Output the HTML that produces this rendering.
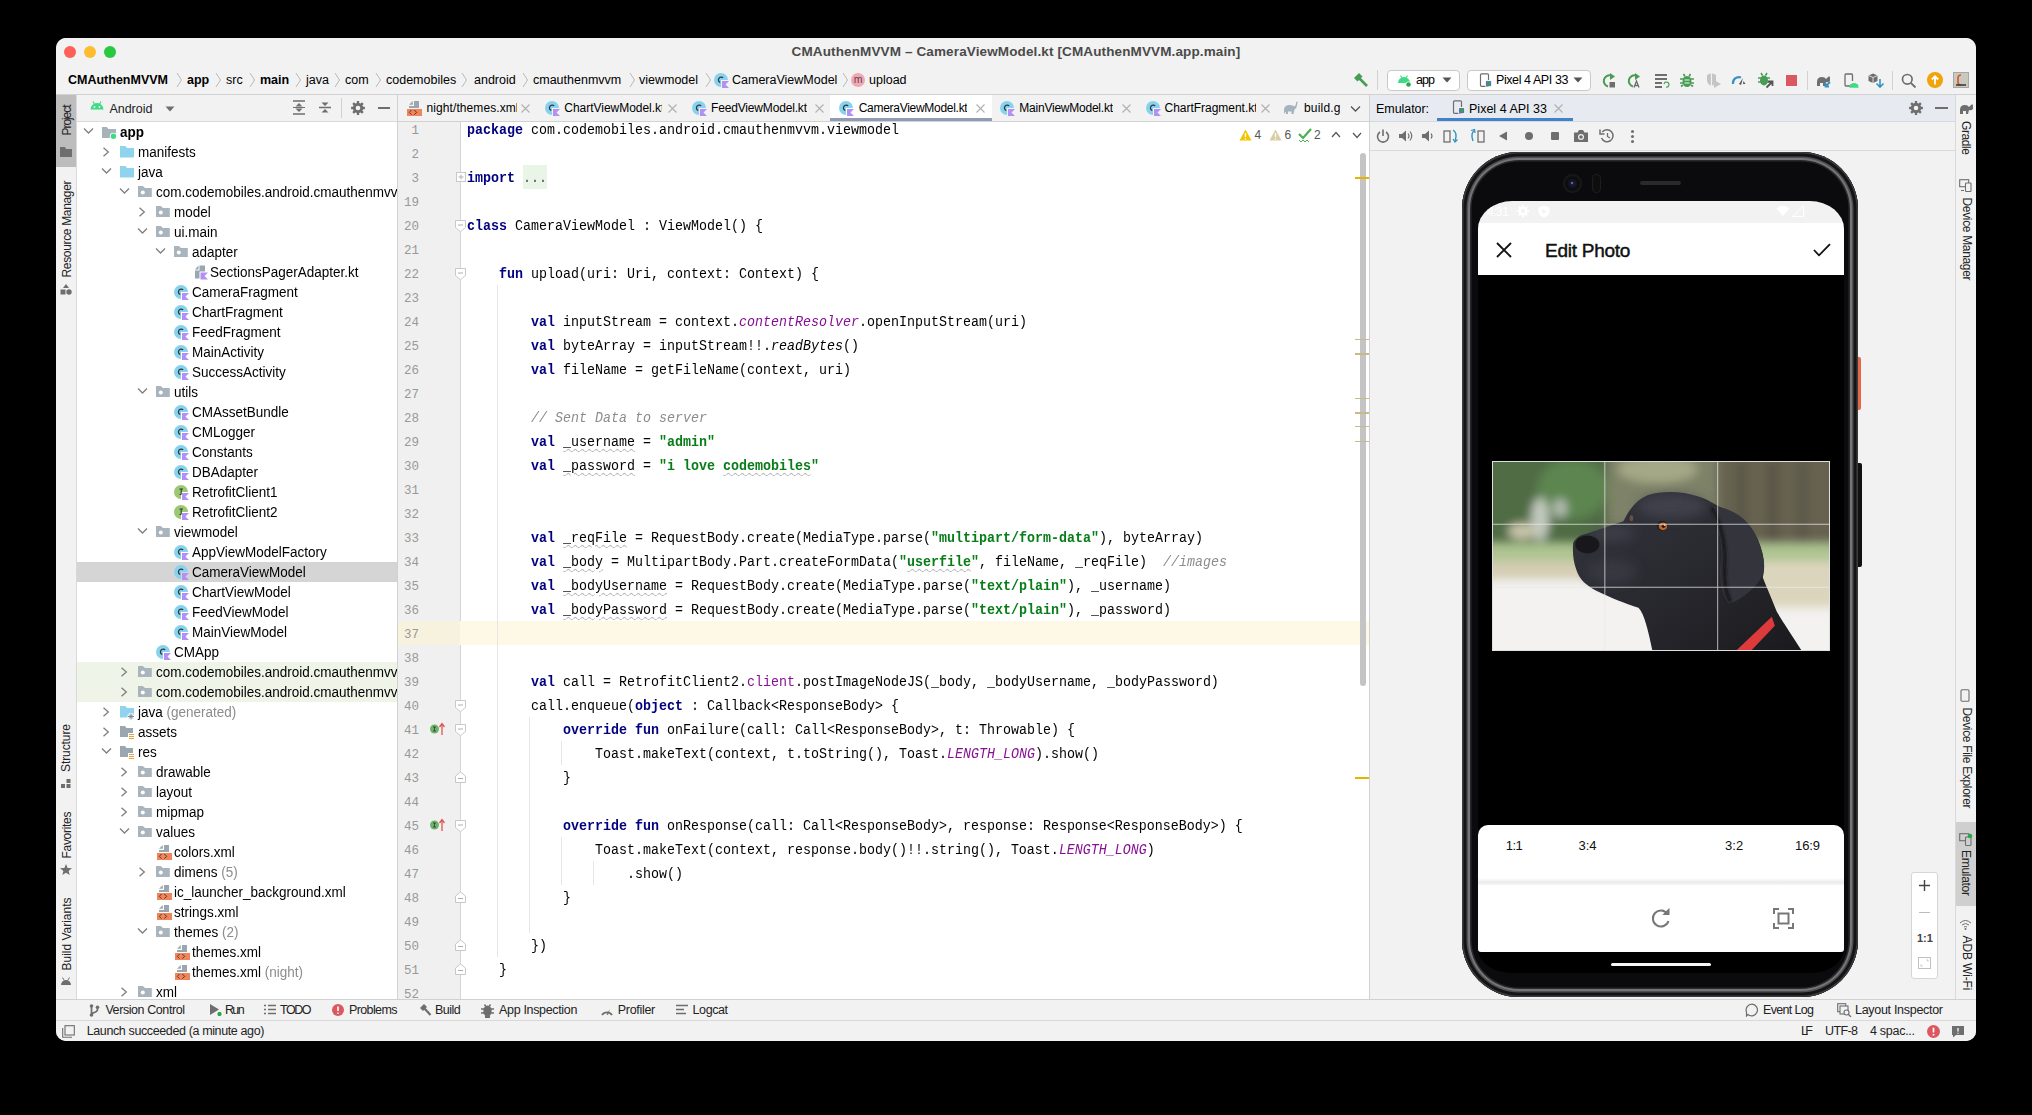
<!DOCTYPE html><html><head><meta charset="utf-8"><style>html,body{margin:0;padding:0;background:#000;width:2032px;height:1115px;overflow:hidden}.t{position:absolute;white-space:pre;font-family:"Liberation Sans", sans-serif}.r{position:absolute;display:block}.m{font-family:"Liberation Mono", monospace}.k{color:#000080;font-weight:700}.s{color:#067d17;font-weight:700}.c{color:#8c8c8c;font-style:italic}.p{color:#871094;font-style:italic}.q{color:#871094}.w{text-decoration:underline wavy #bdbdbd;text-decoration-thickness:1px;text-underline-offset:2px}#win{position:absolute;left:56px;top:38px;width:1920px;height:1003px;border-radius:10px;overflow:hidden;background:#f2f2f2}#in{position:absolute;left:-56px;top:-38px;width:2032px;height:1115px}</style></head><body><div id="win"><div id="in">
<div class="r" style="left:56px;top:38px;width:1920px;height:56px;background:#f2f2f2;"></div>
<div class="r" style="left:56px;top:94px;width:1920px;height:1px;background:#d1d1d1;"></div>
<div class="r" style="left:64px;top:46px;width:12px;height:12px;border-radius:50%;background:#fe5f57"></div>
<div class="r" style="left:84px;top:46px;width:12px;height:12px;border-radius:50%;background:#febc2e"></div>
<div class="r" style="left:104px;top:46px;width:12px;height:12px;border-radius:50%;background:#28c840"></div>
<div class="t" style="left:791.6px;top:42.6px;line-height:18px;font-size:13.5px;color:#4a4a4a;font-weight:700;letter-spacing:0.126px;">CMAuthenMVVM – CameraViewModel.kt [CMAuthenMVVM.app.main]</div>
<div class="t" style="left:68px;top:70.5px;line-height:18px;font-size:12.5px;color:#000;font-weight:700;">CMAuthenMVVM</div>
<div class="t" style="left:187px;top:70.5px;line-height:18px;font-size:12.5px;color:#000;font-weight:700;">app</div>
<div class="t" style="left:226px;top:70.5px;line-height:18px;font-size:12.5px;color:#000;font-weight:400;">src</div>
<div class="t" style="left:260px;top:70.5px;line-height:18px;font-size:12.5px;color:#000;font-weight:700;">main</div>
<div class="t" style="left:306px;top:70.5px;line-height:18px;font-size:12.5px;color:#000;font-weight:400;">java</div>
<div class="t" style="left:345px;top:70.5px;line-height:18px;font-size:12.5px;color:#000;font-weight:400;">com</div>
<div class="t" style="left:386px;top:70.5px;line-height:18px;font-size:12.5px;color:#000;font-weight:400;">codemobiles</div>
<div class="t" style="left:474px;top:70.5px;line-height:18px;font-size:12.5px;color:#000;font-weight:400;">android</div>
<div class="t" style="left:533px;top:70.5px;line-height:18px;font-size:12.5px;color:#000;font-weight:400;">cmauthenmvvm</div>
<div class="t" style="left:639px;top:70.5px;line-height:18px;font-size:12.5px;color:#000;font-weight:400;">viewmodel</div>
<div class="t" style="left:732px;top:70.5px;line-height:18px;font-size:12.5px;color:#000;font-weight:400;">CameraViewModel</div>
<div class="t" style="left:869px;top:70.5px;line-height:18px;font-size:12.5px;color:#000;font-weight:400;">upload</div>
<svg class="r" style="left:176px;top:71.5px;" width="7" height="16" viewBox="0 0 7 16"><path d="M1 1 L5.5 8 L1 15" stroke="#b8b8b8" stroke-width="1" fill="none"/></svg>
<svg class="r" style="left:215px;top:71.5px;" width="7" height="16" viewBox="0 0 7 16"><path d="M1 1 L5.5 8 L1 15" stroke="#b8b8b8" stroke-width="1" fill="none"/></svg>
<svg class="r" style="left:249px;top:71.5px;" width="7" height="16" viewBox="0 0 7 16"><path d="M1 1 L5.5 8 L1 15" stroke="#b8b8b8" stroke-width="1" fill="none"/></svg>
<svg class="r" style="left:295px;top:71.5px;" width="7" height="16" viewBox="0 0 7 16"><path d="M1 1 L5.5 8 L1 15" stroke="#b8b8b8" stroke-width="1" fill="none"/></svg>
<svg class="r" style="left:334px;top:71.5px;" width="7" height="16" viewBox="0 0 7 16"><path d="M1 1 L5.5 8 L1 15" stroke="#b8b8b8" stroke-width="1" fill="none"/></svg>
<svg class="r" style="left:375px;top:71.5px;" width="7" height="16" viewBox="0 0 7 16"><path d="M1 1 L5.5 8 L1 15" stroke="#b8b8b8" stroke-width="1" fill="none"/></svg>
<svg class="r" style="left:461px;top:71.5px;" width="7" height="16" viewBox="0 0 7 16"><path d="M1 1 L5.5 8 L1 15" stroke="#b8b8b8" stroke-width="1" fill="none"/></svg>
<svg class="r" style="left:522px;top:71.5px;" width="7" height="16" viewBox="0 0 7 16"><path d="M1 1 L5.5 8 L1 15" stroke="#b8b8b8" stroke-width="1" fill="none"/></svg>
<svg class="r" style="left:629px;top:71.5px;" width="7" height="16" viewBox="0 0 7 16"><path d="M1 1 L5.5 8 L1 15" stroke="#b8b8b8" stroke-width="1" fill="none"/></svg>
<svg class="r" style="left:705px;top:71.5px;" width="7" height="16" viewBox="0 0 7 16"><path d="M1 1 L5.5 8 L1 15" stroke="#b8b8b8" stroke-width="1" fill="none"/></svg>
<svg class="r" style="left:842px;top:71.5px;" width="7" height="16" viewBox="0 0 7 16"><path d="M1 1 L5.5 8 L1 15" stroke="#b8b8b8" stroke-width="1" fill="none"/></svg>
<svg class="r" style="left:714px;top:71.5px;" width="16" height="17" viewBox="0 0 16 17"><path d="M14 8 A7 7 0 1 0 7 15 L7 8 Z" fill="#87d2ee"/><path d="M9.2 5.9 A2.8 2.8 0 1 0 6.2 10.5" stroke="#333" stroke-width="1.2" fill="none"/><path d="M8 9 H15 L11.5 12.5 L15 16 H8 Z" fill="#b191f5"/></svg>
<div class="r" style="left:851px;top:72.5px;width:14px;height:14px;border-radius:50%;background:#f2a7b4;color:#5a4a4e;font-size:10.5px;font-family:'Liberation Sans',sans-serif;line-height:13.5px;text-align:center">m</div>
<div class="r" style="left:56px;top:95px;width:20px;height:905px;background:#f2f2f2;"></div>
<div class="r" style="left:76px;top:95px;width:1px;height:905px;background:#d9d9d9;"></div>
<div class="r" style="left:56px;top:95px;width:20px;height:72px;background:#bdbdbd;"></div>
<div class="t" style="left:50.5px;top:111.5px;width:71px;margin-left:-20px;height:16px;line-height:16px;text-align:center;font-size:12px;color:#222;letter-spacing:-1.057px;text-indent:-1.057px;transform:rotate(-90deg)">Project</div>
<svg class="r" style="left:60px;top:147px;" width="12" height="10" viewBox="0 0 12 10"><path d="M0 0 H5 L6 2 H12 V10 H0 Z" fill="#6e6e6e"/></svg>
<div class="t" style="left:17.5px;top:220.5px;width:137px;margin-left:-20px;height:16px;line-height:16px;text-align:center;font-size:12px;color:#222;letter-spacing:-0.336px;text-indent:-0.336px;transform:rotate(-90deg)">Resource Manager</div>
<svg class="r" style="left:60px;top:284px;" width="12" height="11" viewBox="0 0 12 11"><path d="M6 0 L9 4 H3 Z" fill="#6e6e6e"/><rect x="0.5" y="5.5" width="5" height="5" fill="#6e6e6e"/><circle cx="9" cy="8" r="2.7" fill="#6e6e6e"/></svg>
<div class="t" style="left:42.0px;top:740.0px;width:88px;margin-left:-20px;height:16px;line-height:16px;text-align:center;font-size:12px;color:#222;letter-spacing:-0.084px;text-indent:-0.084px;transform:rotate(-90deg)">Structure</div>
<svg class="r" style="left:61px;top:779px;" width="10" height="9" viewBox="0 0 10 9"><rect x="0" y="5" width="4" height="4" fill="#6e6e6e"/><rect x="5.5" y="5" width="4" height="4" fill="#6e6e6e"/><rect x="5.5" y="0" width="4" height="4" fill="#6e6e6e"/></svg>
<div class="t" style="left:42.5px;top:826.5px;width:87px;margin-left:-20px;height:16px;line-height:16px;text-align:center;font-size:12px;color:#222;letter-spacing:-0.293px;text-indent:-0.293px;transform:rotate(-90deg)">Favorites</div>
<svg class="r" style="left:60px;top:864px;" width="12" height="11" viewBox="0 0 12 11"><path d="M6 0 L7.6 4 L12 4.2 L8.6 7 L9.7 11 L6 8.7 L2.3 11 L3.4 7 L0 4.2 L4.4 4 Z" fill="#6e6e6e"/></svg>
<div class="t" style="left:29.5px;top:925.5px;width:113px;margin-left:-20px;height:16px;line-height:16px;text-align:center;font-size:12px;color:#222;letter-spacing:-0.011px;text-indent:-0.011px;transform:rotate(-90deg)">Build Variants</div>
<svg class="r" style="left:60px;top:977px;" width="12" height="8" viewBox="0 0 12 8"><path d="M1 8 A5 5 0 0 1 11 8 Z" fill="#6e6e6e"/><path d="M2.5 0.5 L4 3 M9.5 0.5 L8 3" stroke="#6e6e6e" stroke-width="1"/></svg>
<div class="r" style="left:77px;top:95px;width:320px;height:26px;background:#f2f2f2;"></div>
<div class="r" style="left:77px;top:121px;width:320px;height:1px;background:#d9d9d9;"></div>
<div class="r" style="left:397px;top:95px;width:1px;height:905px;background:#d1d1d1;"></div>
<svg class="r" style="left:90px;top:101px;" width="14" height="9" viewBox="0 0 14 9"><path d="M0.5 8.5 A6.5 6.5 0 0 1 13.5 8.5 Z" fill="#3ddc84"/><path d="M3 0.5 L4.5 3 M11 0.5 L9.5 3" stroke="#3ddc84" stroke-width="1.2"/><circle cx="4.5" cy="6" r="0.9" fill="#f2f2f2"/><circle cx="9.5" cy="6" r="0.9" fill="#f2f2f2"/></svg>
<div class="t" style="left:109.4px;top:99.7px;line-height:18px;font-size:12.5px;color:#222;font-weight:400;letter-spacing:-0.016px;">Android</div>
<svg class="r" style="left:165px;top:106px;" width="10" height="6" viewBox="0 0 10 6"><path d="M0.5 0.5 H9.5 L5 5.5 Z" fill="#6e6e6e"/></svg>
<svg class="r" style="left:292px;top:100px;" width="14" height="15" viewBox="0 0 14 15"><path d="M1 1 H13 M1 14 H13" stroke="#6e6e6e" stroke-width="1.5"/><path d="M7 3 L3.5 6.5 H10.5 Z M7 12 L3.5 8.5 H10.5 Z" fill="#6e6e6e"/><path d="M1 7.5 H13" stroke="#6e6e6e" stroke-width="1"/></svg>
<svg class="r" style="left:318px;top:100px;" width="14" height="15" viewBox="0 0 14 15"><path d="M1 7.5 H13" stroke="#6e6e6e" stroke-width="1.5"/><path d="M7 6 L3.5 2.5 H10.5 Z M7 9 L3.5 12.5 H10.5 Z" fill="#6e6e6e"/></svg>
<div class="r" style="left:341px;top:98px;width:1px;height:20px;background:#d1d1d1;"></div>
<svg class="r" style="left:351px;top:101px;" width="14" height="14" viewBox="0 0 14 14"><g transform="scale(1.0)"><path d="M13.90 5.82 L13.90 8.18 L12.07 8.15 L11.40 9.77 L12.72 11.04 L11.04 12.72 L9.77 11.40 L8.15 12.07 L8.18 13.90 L5.82 13.90 L5.85 12.07 L4.23 11.40 L2.96 12.72 L1.28 11.04 L2.60 9.77 L1.93 8.15 L0.10 8.18 L0.10 5.82 L1.93 5.85 L2.60 4.23 L1.28 2.96 L2.96 1.28 L4.23 2.60 L5.85 1.93 L5.82 0.10 L8.18 0.10 L8.15 1.93 L9.77 2.60 L11.04 1.28 L12.72 2.96 L11.40 4.23 L12.07 5.85 Z" fill="#6e6e6e"/><circle cx="7" cy="7" r="2.3" fill="#f2f2f2"/></g></svg>
<div class="r" style="left:378px;top:107px;width:12px;height:2px;background:#6e6e6e;"></div>
<div class="r" style="left:77px;top:122px;width:320px;height:877px;overflow:hidden;background:#fff;"><div class="r" style="left:-77px;top:-122px;width:2032px;height:1115px">
<div class="r" style="left:77px;top:562px;width:320px;height:20px;background:#d5d5d5;"></div>
<div class="r" style="left:77px;top:662px;width:320px;height:40px;background:#eef5e8;"></div>
<svg class="r" style="left:82.8px;top:127.4px;" width="11" height="8" viewBox="0 0 11 8"><path d="M1 1.5 L5.5 6 L10 1.5" stroke="#7f7f7f" stroke-width="1.3" fill="none"/></svg>
<svg class="r" style="left:102px;top:124px;" width="16" height="17" viewBox="0 0 16 17"><path d="M0 3 H4.8 L6.5 5 H14 V14 H0 Z" fill="#a7b2bb"/><circle cx="11.4" cy="12.3" r="3.6" fill="#fff"/><circle cx="11.4" cy="12.3" r="2.7" fill="#3ddc84"/></svg>
<div class="t" style="left:120px;top:122.6px;line-height:20px;font-size:13.5px;color:#000;font-weight:700;transform-origin:0 14.7px;transform:scaleY(1.07)">app</div>
<svg class="r" style="left:102.2px;top:146.5px;" width="8" height="10" viewBox="0 0 8 10"><path d="M1.5 0.8 L6.3 5 L1.5 9.2" stroke="#7f7f7f" stroke-width="1.3" fill="none"/></svg>
<svg class="r" style="left:119px;top:145px;" width="16" height="14" viewBox="0 0 16 14"><path d="M1 1 H6.5 L8 3 H15 V12.5 H1 Z" fill="#8fd3ec"/></svg>
<div class="t" style="left:138px;top:142.6px;line-height:20px;font-size:13.5px;color:#000;font-weight:400;transform-origin:0 14.7px;transform:scaleY(1.07)">manifests</div>
<svg class="r" style="left:100.8px;top:167.4px;" width="11" height="8" viewBox="0 0 11 8"><path d="M1 1.5 L5.5 6 L10 1.5" stroke="#7f7f7f" stroke-width="1.3" fill="none"/></svg>
<svg class="r" style="left:119px;top:165px;" width="16" height="14" viewBox="0 0 16 14"><path d="M1 1 H6.5 L8 3 H15 V12.5 H1 Z" fill="#8fd3ec"/></svg>
<div class="t" style="left:138px;top:162.6px;line-height:20px;font-size:13.5px;color:#000;font-weight:400;transform-origin:0 14.7px;transform:scaleY(1.07)">java</div>
<svg class="r" style="left:118.8px;top:187.4px;" width="11" height="8" viewBox="0 0 11 8"><path d="M1 1.5 L5.5 6 L10 1.5" stroke="#7f7f7f" stroke-width="1.3" fill="none"/></svg>
<svg class="r" style="left:137px;top:185px;" width="16" height="14" viewBox="0 0 16 14"><path d="M1 1 H5.8 L8 3 H14.8 V12 H1 Z" fill="#a9b4bd"/><circle cx="5.8" cy="7.5" r="2" fill="#fff"/></svg>
<div class="t" style="left:156px;top:182.6px;line-height:20px;font-size:13.5px;color:#000;font-weight:400;transform-origin:0 14.7px;transform:scaleY(1.07)">com.codemobiles.android.cmauthenmvvm</div>
<svg class="r" style="left:138.2px;top:206.5px;" width="8" height="10" viewBox="0 0 8 10"><path d="M1.5 0.8 L6.3 5 L1.5 9.2" stroke="#7f7f7f" stroke-width="1.3" fill="none"/></svg>
<svg class="r" style="left:155px;top:205px;" width="16" height="14" viewBox="0 0 16 14"><path d="M1 1 H5.8 L8 3 H14.8 V12 H1 Z" fill="#a9b4bd"/><circle cx="5.8" cy="7.5" r="2" fill="#fff"/></svg>
<div class="t" style="left:174px;top:202.6px;line-height:20px;font-size:13.5px;color:#000;font-weight:400;transform-origin:0 14.7px;transform:scaleY(1.07)">model</div>
<svg class="r" style="left:136.8px;top:227.4px;" width="11" height="8" viewBox="0 0 11 8"><path d="M1 1.5 L5.5 6 L10 1.5" stroke="#7f7f7f" stroke-width="1.3" fill="none"/></svg>
<svg class="r" style="left:155px;top:225px;" width="16" height="14" viewBox="0 0 16 14"><path d="M1 1 H5.8 L8 3 H14.8 V12 H1 Z" fill="#a9b4bd"/><circle cx="5.8" cy="7.5" r="2" fill="#fff"/></svg>
<div class="t" style="left:174px;top:222.6px;line-height:20px;font-size:13.5px;color:#000;font-weight:400;transform-origin:0 14.7px;transform:scaleY(1.07)">ui.main</div>
<svg class="r" style="left:154.8px;top:247.4px;" width="11" height="8" viewBox="0 0 11 8"><path d="M1 1.5 L5.5 6 L10 1.5" stroke="#7f7f7f" stroke-width="1.3" fill="none"/></svg>
<svg class="r" style="left:173px;top:245px;" width="16" height="14" viewBox="0 0 16 14"><path d="M1 1 H5.8 L8 3 H14.8 V12 H1 Z" fill="#a9b4bd"/><circle cx="5.8" cy="7.5" r="2" fill="#fff"/></svg>
<div class="t" style="left:192px;top:242.6px;line-height:20px;font-size:13.5px;color:#000;font-weight:400;transform-origin:0 14.7px;transform:scaleY(1.07)">adapter</div>
<svg class="r" style="left:194px;top:264px;" width="16" height="17" viewBox="0 0 16 17"><path d="M1 5.5 L4.5 1.5 V5.5 Z" fill="#9aa7b0"/><path d="M5.5 1.5 H11 V7.5 H5.5 V14.5 H1 V6.5 H5.5 Z" fill="#9aa7b0"/><path d="M6.5 8.5 H14 L10.5 12 L14 15.5 H6.5 Z" fill="#b191f5"/></svg>
<div class="t" style="left:210px;top:262.6px;line-height:20px;font-size:13.5px;color:#000;font-weight:400;transform-origin:0 14.7px;transform:scaleY(1.07)">SectionsPagerAdapter.kt</div>
<svg class="r" style="left:174px;top:284px;" width="16" height="17" viewBox="0 0 16 17"><path d="M14 8 A7 7 0 1 0 7 15 L7 8 Z" fill="#87d2ee"/><path d="M9.2 5.9 A2.8 2.8 0 1 0 6.2 10.5" stroke="#333" stroke-width="1.2" fill="none"/><path d="M8 9 H15 L11.5 12.5 L15 16 H8 Z" fill="#b191f5"/></svg>
<div class="t" style="left:192px;top:282.6px;line-height:20px;font-size:13.5px;color:#000;font-weight:400;transform-origin:0 14.7px;transform:scaleY(1.07)">CameraFragment</div>
<svg class="r" style="left:174px;top:304px;" width="16" height="17" viewBox="0 0 16 17"><path d="M14 8 A7 7 0 1 0 7 15 L7 8 Z" fill="#87d2ee"/><path d="M9.2 5.9 A2.8 2.8 0 1 0 6.2 10.5" stroke="#333" stroke-width="1.2" fill="none"/><path d="M8 9 H15 L11.5 12.5 L15 16 H8 Z" fill="#b191f5"/></svg>
<div class="t" style="left:192px;top:302.6px;line-height:20px;font-size:13.5px;color:#000;font-weight:400;transform-origin:0 14.7px;transform:scaleY(1.07)">ChartFragment</div>
<svg class="r" style="left:174px;top:324px;" width="16" height="17" viewBox="0 0 16 17"><path d="M14 8 A7 7 0 1 0 7 15 L7 8 Z" fill="#87d2ee"/><path d="M9.2 5.9 A2.8 2.8 0 1 0 6.2 10.5" stroke="#333" stroke-width="1.2" fill="none"/><path d="M8 9 H15 L11.5 12.5 L15 16 H8 Z" fill="#b191f5"/></svg>
<div class="t" style="left:192px;top:322.6px;line-height:20px;font-size:13.5px;color:#000;font-weight:400;transform-origin:0 14.7px;transform:scaleY(1.07)">FeedFragment</div>
<svg class="r" style="left:174px;top:344px;" width="16" height="17" viewBox="0 0 16 17"><path d="M14 8 A7 7 0 1 0 7 15 L7 8 Z" fill="#87d2ee"/><path d="M9.2 5.9 A2.8 2.8 0 1 0 6.2 10.5" stroke="#333" stroke-width="1.2" fill="none"/><path d="M8 9 H15 L11.5 12.5 L15 16 H8 Z" fill="#b191f5"/></svg>
<div class="t" style="left:192px;top:342.6px;line-height:20px;font-size:13.5px;color:#000;font-weight:400;transform-origin:0 14.7px;transform:scaleY(1.07)">MainActivity</div>
<svg class="r" style="left:174px;top:364px;" width="16" height="17" viewBox="0 0 16 17"><path d="M14 8 A7 7 0 1 0 7 15 L7 8 Z" fill="#87d2ee"/><path d="M9.2 5.9 A2.8 2.8 0 1 0 6.2 10.5" stroke="#333" stroke-width="1.2" fill="none"/><path d="M8 9 H15 L11.5 12.5 L15 16 H8 Z" fill="#b191f5"/></svg>
<div class="t" style="left:192px;top:362.6px;line-height:20px;font-size:13.5px;color:#000;font-weight:400;transform-origin:0 14.7px;transform:scaleY(1.07)">SuccessActivity</div>
<svg class="r" style="left:136.8px;top:387.4px;" width="11" height="8" viewBox="0 0 11 8"><path d="M1 1.5 L5.5 6 L10 1.5" stroke="#7f7f7f" stroke-width="1.3" fill="none"/></svg>
<svg class="r" style="left:155px;top:385px;" width="16" height="14" viewBox="0 0 16 14"><path d="M1 1 H5.8 L8 3 H14.8 V12 H1 Z" fill="#a9b4bd"/><circle cx="5.8" cy="7.5" r="2" fill="#fff"/></svg>
<div class="t" style="left:174px;top:382.6px;line-height:20px;font-size:13.5px;color:#000;font-weight:400;transform-origin:0 14.7px;transform:scaleY(1.07)">utils</div>
<svg class="r" style="left:174px;top:404px;" width="16" height="17" viewBox="0 0 16 17"><path d="M14 8 A7 7 0 1 0 7 15 L7 8 Z" fill="#87d2ee"/><path d="M9.2 5.9 A2.8 2.8 0 1 0 6.2 10.5" stroke="#333" stroke-width="1.2" fill="none"/><path d="M8 9 H15 L11.5 12.5 L15 16 H8 Z" fill="#b191f5"/></svg>
<div class="t" style="left:192px;top:402.6px;line-height:20px;font-size:13.5px;color:#000;font-weight:400;transform-origin:0 14.7px;transform:scaleY(1.07)">CMAssetBundle</div>
<svg class="r" style="left:174px;top:424px;" width="16" height="17" viewBox="0 0 16 17"><path d="M14 8 A7 7 0 1 0 7 15 L7 8 Z" fill="#87d2ee"/><path d="M9.2 5.9 A2.8 2.8 0 1 0 6.2 10.5" stroke="#333" stroke-width="1.2" fill="none"/><path d="M8 9 H15 L11.5 12.5 L15 16 H8 Z" fill="#b191f5"/></svg>
<div class="t" style="left:192px;top:422.6px;line-height:20px;font-size:13.5px;color:#000;font-weight:400;transform-origin:0 14.7px;transform:scaleY(1.07)">CMLogger</div>
<svg class="r" style="left:174px;top:444px;" width="16" height="17" viewBox="0 0 16 17"><path d="M14 8 A7 7 0 1 0 7 15 L7 8 Z" fill="#87d2ee"/><path d="M9.2 5.9 A2.8 2.8 0 1 0 6.2 10.5" stroke="#333" stroke-width="1.2" fill="none"/><path d="M8 9 H15 L11.5 12.5 L15 16 H8 Z" fill="#b191f5"/></svg>
<div class="t" style="left:192px;top:442.6px;line-height:20px;font-size:13.5px;color:#000;font-weight:400;transform-origin:0 14.7px;transform:scaleY(1.07)">Constants</div>
<svg class="r" style="left:174px;top:464px;" width="16" height="17" viewBox="0 0 16 17"><path d="M14 8 A7 7 0 1 0 7 15 L7 8 Z" fill="#87d2ee"/><path d="M9.2 5.9 A2.8 2.8 0 1 0 6.2 10.5" stroke="#333" stroke-width="1.2" fill="none"/><path d="M8 9 H15 L11.5 12.5 L15 16 H8 Z" fill="#b191f5"/></svg>
<div class="t" style="left:192px;top:462.6px;line-height:20px;font-size:13.5px;color:#000;font-weight:400;transform-origin:0 14.7px;transform:scaleY(1.07)">DBAdapter</div>
<svg class="r" style="left:174px;top:484px;" width="16" height="17" viewBox="0 0 16 17"><path d="M14 8 A7 7 0 1 0 7 15 L7 8 Z" fill="#9ac971"/><path d="M5.5 5 H9 M7.2 5 V10.5 M5.5 10.5 H7" stroke="#333" stroke-width="1.1" fill="none"/><path d="M8 9 H15 L11.5 12.5 L15 16 H8 Z" fill="#b191f5"/></svg>
<div class="t" style="left:192px;top:482.6px;line-height:20px;font-size:13.5px;color:#000;font-weight:400;transform-origin:0 14.7px;transform:scaleY(1.07)">RetrofitClient1</div>
<svg class="r" style="left:174px;top:504px;" width="16" height="17" viewBox="0 0 16 17"><path d="M14 8 A7 7 0 1 0 7 15 L7 8 Z" fill="#9ac971"/><path d="M5.5 5 H9 M7.2 5 V10.5 M5.5 10.5 H7" stroke="#333" stroke-width="1.1" fill="none"/><path d="M8 9 H15 L11.5 12.5 L15 16 H8 Z" fill="#b191f5"/></svg>
<div class="t" style="left:192px;top:502.6px;line-height:20px;font-size:13.5px;color:#000;font-weight:400;transform-origin:0 14.7px;transform:scaleY(1.07)">RetrofitClient2</div>
<svg class="r" style="left:136.8px;top:527.4px;" width="11" height="8" viewBox="0 0 11 8"><path d="M1 1.5 L5.5 6 L10 1.5" stroke="#7f7f7f" stroke-width="1.3" fill="none"/></svg>
<svg class="r" style="left:155px;top:525px;" width="16" height="14" viewBox="0 0 16 14"><path d="M1 1 H5.8 L8 3 H14.8 V12 H1 Z" fill="#a9b4bd"/><circle cx="5.8" cy="7.5" r="2" fill="#fff"/></svg>
<div class="t" style="left:174px;top:522.6px;line-height:20px;font-size:13.5px;color:#000;font-weight:400;transform-origin:0 14.7px;transform:scaleY(1.07)">viewmodel</div>
<svg class="r" style="left:174px;top:544px;" width="16" height="17" viewBox="0 0 16 17"><path d="M14 8 A7 7 0 1 0 7 15 L7 8 Z" fill="#87d2ee"/><path d="M9.2 5.9 A2.8 2.8 0 1 0 6.2 10.5" stroke="#333" stroke-width="1.2" fill="none"/><path d="M8 9 H15 L11.5 12.5 L15 16 H8 Z" fill="#b191f5"/></svg>
<div class="t" style="left:192px;top:542.6px;line-height:20px;font-size:13.5px;color:#000;font-weight:400;transform-origin:0 14.7px;transform:scaleY(1.07)">AppViewModelFactory</div>
<svg class="r" style="left:174px;top:564px;" width="16" height="17" viewBox="0 0 16 17"><path d="M14 8 A7 7 0 1 0 7 15 L7 8 Z" fill="#87d2ee"/><path d="M9.2 5.9 A2.8 2.8 0 1 0 6.2 10.5" stroke="#333" stroke-width="1.2" fill="none"/><path d="M8 9 H15 L11.5 12.5 L15 16 H8 Z" fill="#b191f5"/></svg>
<div class="t" style="left:192px;top:562.6px;line-height:20px;font-size:13.5px;color:#000;font-weight:400;transform-origin:0 14.7px;transform:scaleY(1.07)">CameraViewModel</div>
<svg class="r" style="left:174px;top:584px;" width="16" height="17" viewBox="0 0 16 17"><path d="M14 8 A7 7 0 1 0 7 15 L7 8 Z" fill="#87d2ee"/><path d="M9.2 5.9 A2.8 2.8 0 1 0 6.2 10.5" stroke="#333" stroke-width="1.2" fill="none"/><path d="M8 9 H15 L11.5 12.5 L15 16 H8 Z" fill="#b191f5"/></svg>
<div class="t" style="left:192px;top:582.6px;line-height:20px;font-size:13.5px;color:#000;font-weight:400;transform-origin:0 14.7px;transform:scaleY(1.07)">ChartViewModel</div>
<svg class="r" style="left:174px;top:604px;" width="16" height="17" viewBox="0 0 16 17"><path d="M14 8 A7 7 0 1 0 7 15 L7 8 Z" fill="#87d2ee"/><path d="M9.2 5.9 A2.8 2.8 0 1 0 6.2 10.5" stroke="#333" stroke-width="1.2" fill="none"/><path d="M8 9 H15 L11.5 12.5 L15 16 H8 Z" fill="#b191f5"/></svg>
<div class="t" style="left:192px;top:602.6px;line-height:20px;font-size:13.5px;color:#000;font-weight:400;transform-origin:0 14.7px;transform:scaleY(1.07)">FeedViewModel</div>
<svg class="r" style="left:174px;top:624px;" width="16" height="17" viewBox="0 0 16 17"><path d="M14 8 A7 7 0 1 0 7 15 L7 8 Z" fill="#87d2ee"/><path d="M9.2 5.9 A2.8 2.8 0 1 0 6.2 10.5" stroke="#333" stroke-width="1.2" fill="none"/><path d="M8 9 H15 L11.5 12.5 L15 16 H8 Z" fill="#b191f5"/></svg>
<div class="t" style="left:192px;top:622.6px;line-height:20px;font-size:13.5px;color:#000;font-weight:400;transform-origin:0 14.7px;transform:scaleY(1.07)">MainViewModel</div>
<svg class="r" style="left:156px;top:644px;" width="16" height="17" viewBox="0 0 16 17"><path d="M14 8 A7 7 0 1 0 7 15 L7 8 Z" fill="#87d2ee"/><path d="M9.2 5.9 A2.8 2.8 0 1 0 6.2 10.5" stroke="#333" stroke-width="1.2" fill="none"/><path d="M8 9 H15 L11.5 12.5 L15 16 H8 Z" fill="#b191f5"/></svg>
<div class="t" style="left:174px;top:642.6px;line-height:20px;font-size:13.5px;color:#000;font-weight:400;transform-origin:0 14.7px;transform:scaleY(1.07)">CMApp</div>
<svg class="r" style="left:120.2px;top:666.5px;" width="8" height="10" viewBox="0 0 8 10"><path d="M1.5 0.8 L6.3 5 L1.5 9.2" stroke="#7f7f7f" stroke-width="1.3" fill="none"/></svg>
<svg class="r" style="left:137px;top:665px;" width="16" height="14" viewBox="0 0 16 14"><path d="M1 1 H5.8 L8 3 H14.8 V12 H1 Z" fill="#a9b4bd"/><circle cx="5.8" cy="7.5" r="2" fill="#fff"/></svg>
<div class="t" style="left:156px;top:662.6px;line-height:20px;font-size:13.5px;color:#000;font-weight:400;transform-origin:0 14.7px;transform:scaleY(1.07)">com.codemobiles.android.cmauthenmvvm</div>
<svg class="r" style="left:120.2px;top:686.5px;" width="8" height="10" viewBox="0 0 8 10"><path d="M1.5 0.8 L6.3 5 L1.5 9.2" stroke="#7f7f7f" stroke-width="1.3" fill="none"/></svg>
<svg class="r" style="left:137px;top:685px;" width="16" height="14" viewBox="0 0 16 14"><path d="M1 1 H5.8 L8 3 H14.8 V12 H1 Z" fill="#a9b4bd"/><circle cx="5.8" cy="7.5" r="2" fill="#fff"/></svg>
<div class="t" style="left:156px;top:682.6px;line-height:20px;font-size:13.5px;color:#000;font-weight:400;transform-origin:0 14.7px;transform:scaleY(1.07)">com.codemobiles.android.cmauthenmvvm</div>
<svg class="r" style="left:102.2px;top:706.5px;" width="8" height="10" viewBox="0 0 8 10"><path d="M1.5 0.8 L6.3 5 L1.5 9.2" stroke="#7f7f7f" stroke-width="1.3" fill="none"/></svg>
<svg class="r" style="left:119px;top:705px;" width="18" height="16" viewBox="0 0 18 16"><path d="M1 1 H6.5 L8 3 H15 V12.5 H1 Z" fill="#8fd3ec"/><circle cx="12" cy="11.5" r="3.5" fill="#fff"/><path d="M12 8.5 V14.5 M9 11.5 H15 M10 9.5 L14 13.5 M14 9.5 L10 13.5" stroke="#7a8a99" stroke-width="1"/></svg>
<div class="t" style="left:138px;top:702.6px;line-height:20px;font-size:13.5px;color:#000;font-weight:400;transform-origin:0 14.7px;transform:scaleY(1.07)">java<span style="color:#8c8c8c"> (generated)</span></div>
<svg class="r" style="left:102.2px;top:726.5px;" width="8" height="10" viewBox="0 0 8 10"><path d="M1.5 0.8 L6.3 5 L1.5 9.2" stroke="#7f7f7f" stroke-width="1.3" fill="none"/></svg>
<svg class="r" style="left:119px;top:724px;" width="18" height="17" viewBox="0 0 18 17"><path d="M1 2 H6 L7.5 4 H14 V13 H1 Z" fill="#9aa7b0"/><rect x="9" y="9" width="7" height="7" fill="#fff"/><path d="M10 10.5 H15 M10 12.5 H15 M10 14.5 H15" stroke="#e4a23a" stroke-width="1"/></svg>
<div class="t" style="left:138px;top:722.6px;line-height:20px;font-size:13.5px;color:#000;font-weight:400;transform-origin:0 14.7px;transform:scaleY(1.07)">assets</div>
<svg class="r" style="left:100.8px;top:747.4px;" width="11" height="8" viewBox="0 0 11 8"><path d="M1 1.5 L5.5 6 L10 1.5" stroke="#7f7f7f" stroke-width="1.3" fill="none"/></svg>
<svg class="r" style="left:119px;top:744px;" width="18" height="17" viewBox="0 0 18 17"><path d="M1 2 H6 L7.5 4 H14 V13 H1 Z" fill="#9aa7b0"/><rect x="9" y="9" width="7" height="7" fill="#fff"/><path d="M10 10.5 H15 M10 12.5 H15 M10 14.5 H15" stroke="#e4a23a" stroke-width="1"/></svg>
<div class="t" style="left:138px;top:742.6px;line-height:20px;font-size:13.5px;color:#000;font-weight:400;transform-origin:0 14.7px;transform:scaleY(1.07)">res</div>
<svg class="r" style="left:120.2px;top:766.5px;" width="8" height="10" viewBox="0 0 8 10"><path d="M1.5 0.8 L6.3 5 L1.5 9.2" stroke="#7f7f7f" stroke-width="1.3" fill="none"/></svg>
<svg class="r" style="left:137px;top:765px;" width="16" height="14" viewBox="0 0 16 14"><path d="M1 1 H5.8 L8 3 H14.8 V12 H1 Z" fill="#a9b4bd"/><circle cx="5.8" cy="7.5" r="2" fill="#fff"/></svg>
<div class="t" style="left:156px;top:762.6px;line-height:20px;font-size:13.5px;color:#000;font-weight:400;transform-origin:0 14.7px;transform:scaleY(1.07)">drawable</div>
<svg class="r" style="left:120.2px;top:786.5px;" width="8" height="10" viewBox="0 0 8 10"><path d="M1.5 0.8 L6.3 5 L1.5 9.2" stroke="#7f7f7f" stroke-width="1.3" fill="none"/></svg>
<svg class="r" style="left:137px;top:785px;" width="16" height="14" viewBox="0 0 16 14"><path d="M1 1 H5.8 L8 3 H14.8 V12 H1 Z" fill="#a9b4bd"/><circle cx="5.8" cy="7.5" r="2" fill="#fff"/></svg>
<div class="t" style="left:156px;top:782.6px;line-height:20px;font-size:13.5px;color:#000;font-weight:400;transform-origin:0 14.7px;transform:scaleY(1.07)">layout</div>
<svg class="r" style="left:120.2px;top:806.5px;" width="8" height="10" viewBox="0 0 8 10"><path d="M1.5 0.8 L6.3 5 L1.5 9.2" stroke="#7f7f7f" stroke-width="1.3" fill="none"/></svg>
<svg class="r" style="left:137px;top:805px;" width="16" height="14" viewBox="0 0 16 14"><path d="M1 1 H5.8 L8 3 H14.8 V12 H1 Z" fill="#a9b4bd"/><circle cx="5.8" cy="7.5" r="2" fill="#fff"/></svg>
<div class="t" style="left:156px;top:802.6px;line-height:20px;font-size:13.5px;color:#000;font-weight:400;transform-origin:0 14.7px;transform:scaleY(1.07)">mipmap</div>
<svg class="r" style="left:118.8px;top:827.4px;" width="11" height="8" viewBox="0 0 11 8"><path d="M1 1.5 L5.5 6 L10 1.5" stroke="#7f7f7f" stroke-width="1.3" fill="none"/></svg>
<svg class="r" style="left:137px;top:825px;" width="16" height="14" viewBox="0 0 16 14"><path d="M1 1 H5.8 L8 3 H14.8 V12 H1 Z" fill="#a9b4bd"/><circle cx="5.8" cy="7.5" r="2" fill="#fff"/></svg>
<div class="t" style="left:156px;top:822.6px;line-height:20px;font-size:13.5px;color:#000;font-weight:400;transform-origin:0 14.7px;transform:scaleY(1.07)">values</div>
<svg class="r" style="left:156px;top:844px;" width="17" height="17" viewBox="0 0 17 17"><path d="M3 4.7 L6.8 1 V4.7 Z" fill="#9aa7b0"/><path d="M8 1 H13 V8 H3 V6 H8 Z" fill="#9aa7b0"/><rect x="1" y="9" width="15" height="7" fill="#f0845a"/><path d="M5.5 10 L3.3 12.4 L5.5 14.6 M8.3 10 L10.7 12.4 L8.3 14.6" stroke="#5a3a2a" stroke-width="1" fill="none"/></svg>
<div class="t" style="left:174px;top:842.6px;line-height:20px;font-size:13.5px;color:#000;font-weight:400;transform-origin:0 14.7px;transform:scaleY(1.07)">colors.xml</div>
<svg class="r" style="left:138.2px;top:866.5px;" width="8" height="10" viewBox="0 0 8 10"><path d="M1.5 0.8 L6.3 5 L1.5 9.2" stroke="#7f7f7f" stroke-width="1.3" fill="none"/></svg>
<svg class="r" style="left:155px;top:865px;" width="16" height="14" viewBox="0 0 16 14"><path d="M1 1 H5.8 L8 3 H14.8 V12 H1 Z" fill="#a9b4bd"/><circle cx="5.8" cy="7.5" r="2" fill="#fff"/></svg>
<div class="t" style="left:174px;top:862.6px;line-height:20px;font-size:13.5px;color:#000;font-weight:400;transform-origin:0 14.7px;transform:scaleY(1.07)">dimens<span style="color:#8c8c8c"> (5)</span></div>
<svg class="r" style="left:156px;top:884px;" width="17" height="17" viewBox="0 0 17 17"><path d="M3 4.7 L6.8 1 V4.7 Z" fill="#9aa7b0"/><path d="M8 1 H13 V8 H3 V6 H8 Z" fill="#9aa7b0"/><rect x="1" y="9" width="15" height="7" fill="#f0845a"/><path d="M5.5 10 L3.3 12.4 L5.5 14.6 M8.3 10 L10.7 12.4 L8.3 14.6" stroke="#5a3a2a" stroke-width="1" fill="none"/></svg>
<div class="t" style="left:174px;top:882.6px;line-height:20px;font-size:13.5px;color:#000;font-weight:400;transform-origin:0 14.7px;transform:scaleY(1.07)">ic_launcher_background.xml</div>
<svg class="r" style="left:156px;top:904px;" width="17" height="17" viewBox="0 0 17 17"><path d="M3 4.7 L6.8 1 V4.7 Z" fill="#9aa7b0"/><path d="M8 1 H13 V8 H3 V6 H8 Z" fill="#9aa7b0"/><rect x="1" y="9" width="15" height="7" fill="#f0845a"/><path d="M5.5 10 L3.3 12.4 L5.5 14.6 M8.3 10 L10.7 12.4 L8.3 14.6" stroke="#5a3a2a" stroke-width="1" fill="none"/></svg>
<div class="t" style="left:174px;top:902.6px;line-height:20px;font-size:13.5px;color:#000;font-weight:400;transform-origin:0 14.7px;transform:scaleY(1.07)">strings.xml</div>
<svg class="r" style="left:136.8px;top:927.4px;" width="11" height="8" viewBox="0 0 11 8"><path d="M1 1.5 L5.5 6 L10 1.5" stroke="#7f7f7f" stroke-width="1.3" fill="none"/></svg>
<svg class="r" style="left:155px;top:925px;" width="16" height="14" viewBox="0 0 16 14"><path d="M1 1 H5.8 L8 3 H14.8 V12 H1 Z" fill="#a9b4bd"/><circle cx="5.8" cy="7.5" r="2" fill="#fff"/></svg>
<div class="t" style="left:174px;top:922.6px;line-height:20px;font-size:13.5px;color:#000;font-weight:400;transform-origin:0 14.7px;transform:scaleY(1.07)">themes<span style="color:#8c8c8c"> (2)</span></div>
<svg class="r" style="left:174px;top:944px;" width="17" height="17" viewBox="0 0 17 17"><path d="M3 4.7 L6.8 1 V4.7 Z" fill="#9aa7b0"/><path d="M8 1 H13 V8 H3 V6 H8 Z" fill="#9aa7b0"/><rect x="1" y="9" width="15" height="7" fill="#f0845a"/><path d="M5.5 10 L3.3 12.4 L5.5 14.6 M8.3 10 L10.7 12.4 L8.3 14.6" stroke="#5a3a2a" stroke-width="1" fill="none"/></svg>
<div class="t" style="left:192px;top:942.6px;line-height:20px;font-size:13.5px;color:#000;font-weight:400;transform-origin:0 14.7px;transform:scaleY(1.07)">themes.xml</div>
<svg class="r" style="left:174px;top:964px;" width="17" height="17" viewBox="0 0 17 17"><path d="M3 4.7 L6.8 1 V4.7 Z" fill="#9aa7b0"/><path d="M8 1 H13 V8 H3 V6 H8 Z" fill="#9aa7b0"/><rect x="1" y="9" width="15" height="7" fill="#f0845a"/><path d="M5.5 10 L3.3 12.4 L5.5 14.6 M8.3 10 L10.7 12.4 L8.3 14.6" stroke="#5a3a2a" stroke-width="1" fill="none"/></svg>
<div class="t" style="left:192px;top:962.6px;line-height:20px;font-size:13.5px;color:#000;font-weight:400;transform-origin:0 14.7px;transform:scaleY(1.07)">themes.xml<span style="color:#8c8c8c"> (night)</span></div>
<svg class="r" style="left:120.2px;top:986.5px;" width="8" height="10" viewBox="0 0 8 10"><path d="M1.5 0.8 L6.3 5 L1.5 9.2" stroke="#7f7f7f" stroke-width="1.3" fill="none"/></svg>
<svg class="r" style="left:137px;top:985px;" width="16" height="14" viewBox="0 0 16 14"><path d="M1 1 H5.8 L8 3 H14.8 V12 H1 Z" fill="#a9b4bd"/><circle cx="5.8" cy="7.5" r="2" fill="#fff"/></svg>
<div class="t" style="left:156px;top:982.6px;line-height:20px;font-size:13.5px;color:#000;font-weight:400;transform-origin:0 14.7px;transform:scaleY(1.07)">xml</div>
</div></div>
<div class="r" style="left:398px;top:95px;width:971px;height:26px;background:#f2f2f2;"></div>
<div class="r" style="left:398px;top:121px;width:971px;height:1px;background:#d1d1d1;"></div>
<div class="r" style="left:830px;top:95px;width:162px;height:26px;background:#fff;"></div>
<div class="r" style="left:830px;top:118px;width:162px;height:3px;background:#8f9cb3;"></div>
<svg class="r" style="left:406px;top:100px;" width="17" height="17" viewBox="0 0 17 17"><path d="M3 4.7 L6.8 1 V4.7 Z" fill="#9aa7b0"/><path d="M8 1 H13 V8 H3 V6 H8 Z" fill="#9aa7b0"/><rect x="1" y="9" width="15" height="7" fill="#f0845a"/><path d="M5.5 10 L3.3 12.4 L5.5 14.6 M8.3 10 L10.7 12.4 L8.3 14.6" stroke="#5a3a2a" stroke-width="1" fill="none"/></svg>
<div class="r" style="left:426px;top:95px;width:91px;height:26px;overflow:hidden;background:transparent;"><div class="r" style="left:-426px;top:-95px;width:2032px;height:1115px">
<div class="t" style="left:426.5px;top:99.0px;line-height:18px;font-size:12px;color:#000;font-weight:400;letter-spacing:0.087px;">night/themes.xml</div>
</div></div>
<svg class="r" style="left:521px;top:104px;" width="9" height="9" viewBox="0 0 9 9"><path d="M0.5 0.5 L8.5 8.5 M8.5 0.5 L0.5 8.5" stroke="#b0b0b0" stroke-width="1.1"/></svg>
<svg class="r" style="left:545px;top:100px;" width="16" height="17" viewBox="0 0 16 17"><path d="M14 8 A7 7 0 1 0 7 15 L7 8 Z" fill="#87d2ee"/><path d="M9.2 5.9 A2.8 2.8 0 1 0 6.2 10.5" stroke="#333" stroke-width="1.2" fill="none"/><path d="M8 9 H15 L11.5 12.5 L15 16 H8 Z" fill="#b191f5"/></svg>
<div class="r" style="left:564px;top:95px;width:98px;height:26px;overflow:hidden;background:transparent;"><div class="r" style="left:-564px;top:-95px;width:2032px;height:1115px">
<div class="t" style="left:564.3px;top:99.0px;line-height:18px;font-size:12px;color:#000;font-weight:400;letter-spacing:-0.030px;">ChartViewModel.kt</div>
</div></div>
<svg class="r" style="left:668px;top:104px;" width="9" height="9" viewBox="0 0 9 9"><path d="M0.5 0.5 L8.5 8.5 M8.5 0.5 L0.5 8.5" stroke="#b0b0b0" stroke-width="1.1"/></svg>
<svg class="r" style="left:692px;top:100px;" width="16" height="17" viewBox="0 0 16 17"><path d="M14 8 A7 7 0 1 0 7 15 L7 8 Z" fill="#87d2ee"/><path d="M9.2 5.9 A2.8 2.8 0 1 0 6.2 10.5" stroke="#333" stroke-width="1.2" fill="none"/><path d="M8 9 H15 L11.5 12.5 L15 16 H8 Z" fill="#b191f5"/></svg>
<div class="r" style="left:711px;top:95px;width:96px;height:26px;overflow:hidden;background:transparent;"><div class="r" style="left:-711px;top:-95px;width:2032px;height:1115px">
<div class="t" style="left:711px;top:99.0px;line-height:18px;font-size:12px;color:#000;font-weight:400;letter-spacing:-0.166px;">FeedViewModel.kt</div>
</div></div>
<svg class="r" style="left:815px;top:104px;" width="9" height="9" viewBox="0 0 9 9"><path d="M0.5 0.5 L8.5 8.5 M8.5 0.5 L0.5 8.5" stroke="#b0b0b0" stroke-width="1.1"/></svg>
<svg class="r" style="left:839px;top:100px;" width="16" height="17" viewBox="0 0 16 17"><path d="M14 8 A7 7 0 1 0 7 15 L7 8 Z" fill="#87d2ee"/><path d="M9.2 5.9 A2.8 2.8 0 1 0 6.2 10.5" stroke="#333" stroke-width="1.2" fill="none"/><path d="M8 9 H15 L11.5 12.5 L15 16 H8 Z" fill="#b191f5"/></svg>
<div class="r" style="left:858px;top:95px;width:109px;height:26px;overflow:hidden;background:transparent;"><div class="r" style="left:-858px;top:-95px;width:2032px;height:1115px">
<div class="t" style="left:858.7px;top:99.0px;line-height:18px;font-size:12px;color:#000;font-weight:400;letter-spacing:-0.284px;">CameraViewModel.kt</div>
</div></div>
<svg class="r" style="left:976px;top:104px;" width="9" height="9" viewBox="0 0 9 9"><path d="M0.5 0.5 L8.5 8.5 M8.5 0.5 L0.5 8.5" stroke="#b0b0b0" stroke-width="1.1"/></svg>
<svg class="r" style="left:1000px;top:100px;" width="16" height="17" viewBox="0 0 16 17"><path d="M14 8 A7 7 0 1 0 7 15 L7 8 Z" fill="#87d2ee"/><path d="M9.2 5.9 A2.8 2.8 0 1 0 6.2 10.5" stroke="#333" stroke-width="1.2" fill="none"/><path d="M8 9 H15 L11.5 12.5 L15 16 H8 Z" fill="#b191f5"/></svg>
<div class="r" style="left:1019px;top:95px;width:94px;height:26px;overflow:hidden;background:transparent;"><div class="r" style="left:-1019px;top:-95px;width:2032px;height:1115px">
<div class="t" style="left:1019.3px;top:99.0px;line-height:18px;font-size:12px;color:#000;font-weight:400;letter-spacing:-0.230px;">MainViewModel.kt</div>
</div></div>
<svg class="r" style="left:1122px;top:104px;" width="9" height="9" viewBox="0 0 9 9"><path d="M0.5 0.5 L8.5 8.5 M8.5 0.5 L0.5 8.5" stroke="#b0b0b0" stroke-width="1.1"/></svg>
<svg class="r" style="left:1146px;top:100px;" width="16" height="17" viewBox="0 0 16 17"><path d="M14 8 A7 7 0 1 0 7 15 L7 8 Z" fill="#87d2ee"/><path d="M9.2 5.9 A2.8 2.8 0 1 0 6.2 10.5" stroke="#333" stroke-width="1.2" fill="none"/><path d="M8 9 H15 L11.5 12.5 L15 16 H8 Z" fill="#b191f5"/></svg>
<div class="r" style="left:1164px;top:95px;width:92px;height:26px;overflow:hidden;background:transparent;"><div class="r" style="left:-1164px;top:-95px;width:2032px;height:1115px">
<div class="t" style="left:1164.5px;top:99.0px;line-height:18px;font-size:12px;color:#000;font-weight:400;letter-spacing:-0.023px;">ChartFragment.kt</div>
</div></div>
<svg class="r" style="left:1261px;top:104px;" width="9" height="9" viewBox="0 0 9 9"><path d="M0.5 0.5 L8.5 8.5 M8.5 0.5 L0.5 8.5" stroke="#b0b0b0" stroke-width="1.1"/></svg>
<svg class="r" style="left:1283px;top:101px;" width="16" height="14" viewBox="0 0 16 14"><path d="M1 13 V9 Q1 4 7 4 Q10 4 11.5 5.5 Q13 4 13 2 Q13 0.5 14.3 0.8 L14.8 1.4 Q14 2 14.2 3.5 Q14 7 11.5 8.5 L10.5 13 H8.5 V10.5 H5 V13 H3 V10.5 Z" fill="#a3b3bf"/></svg>
<div class="r" style="left:1304px;top:95px;width:36px;height:26px;overflow:hidden;background:transparent;"><div class="r" style="left:-1304px;top:-95px;width:2032px;height:1115px">
<div class="t" style="left:1304px;top:99.0px;line-height:18px;font-size:12px;color:#000;font-weight:400;letter-spacing:0.178px;">build.gradle</div>
</div></div>
<svg class="r" style="left:1350px;top:104.5px;" width="11" height="8" viewBox="0 0 11 8"><path d="M1 1.5 L5.5 6 L10 1.5" stroke="#555" stroke-width="1.3" fill="none"/></svg>
<div class="r" style="left:398px;top:122px;width:971px;height:877px;background:#fff;"></div>
<div class="r" style="left:398px;top:122px;width:62px;height:877px;background:#f0f0f0;"></div>
<div class="r" style="left:460px;top:122px;width:1px;height:877px;background:#d5d5d5;"></div>
<div class="r" style="left:398px;top:621px;width:971px;height:24px;background:#fdf9e6;"></div>
<div class="r" style="left:398px;top:621px;width:62px;height:24px;background:#f7f2dd;"></div>
<div class="r" style="left:398px;top:122px;width:964px;height:877px;overflow:hidden;background:transparent;"><div class="r" style="left:-398px;top:-122px;width:2032px;height:1115px">
<div class="r" style="left:523px;top:165px;width:24px;height:24px;background:#e9f5e6;"></div>
<div class="r" style="left:497px;top:285px;width:1px;height:672px;background:#e6e6e6;"></div>
<div class="r" style="left:529px;top:717px;width:1px;height:216px;background:#e6e6e6;"></div>
<div class="r" style="left:561px;top:741px;width:1px;height:24px;background:#e6e6e6;"></div>
<div class="r" style="left:561px;top:837px;width:1px;height:48px;background:#e6e6e6;"></div>
<div class="r" style="left:593px;top:861px;width:1px;height:24px;background:#e6e6e6;"></div>
<div class="t m" style="left:398px;top:117px;width:21px;line-height:24px;font-size:12.5px;color:#999;text-align:right;padding-top:1.7px">1</div>
<div class="t m" style="left:467px;top:117px;line-height:24px;font-size:13.333px;color:#000;padding-top:1.6px;transform-origin:0 17.2px;transform:scaleY(1.12)"><span class="k">package</span> com.codemobiles.android.cmauthenmvvm.viewmodel</div>
<div class="t m" style="left:398px;top:141px;width:21px;line-height:24px;font-size:12.5px;color:#999;text-align:right;padding-top:1.7px">2</div>
<div class="t m" style="left:398px;top:165px;width:21px;line-height:24px;font-size:12.5px;color:#999;text-align:right;padding-top:1.7px">3</div>
<div class="t m" style="left:467px;top:165px;line-height:24px;font-size:13.333px;color:#000;padding-top:1.6px;transform-origin:0 17.2px;transform:scaleY(1.12)"><span class="k">import</span> <span style="color:#555">...</span></div>
<div class="t m" style="left:398px;top:189px;width:21px;line-height:24px;font-size:12.5px;color:#999;text-align:right;padding-top:1.7px">19</div>
<div class="t m" style="left:398px;top:213px;width:21px;line-height:24px;font-size:12.5px;color:#999;text-align:right;padding-top:1.7px">20</div>
<div class="t m" style="left:467px;top:213px;line-height:24px;font-size:13.333px;color:#000;padding-top:1.6px;transform-origin:0 17.2px;transform:scaleY(1.12)"><span class="k">class</span> CameraViewModel : ViewModel() {</div>
<div class="t m" style="left:398px;top:237px;width:21px;line-height:24px;font-size:12.5px;color:#999;text-align:right;padding-top:1.7px">21</div>
<div class="t m" style="left:398px;top:261px;width:21px;line-height:24px;font-size:12.5px;color:#999;text-align:right;padding-top:1.7px">22</div>
<div class="t m" style="left:467px;top:261px;line-height:24px;font-size:13.333px;color:#000;padding-top:1.6px;transform-origin:0 17.2px;transform:scaleY(1.12)">    <span class="k">fun</span> upload(uri: Uri, context: Context) {</div>
<div class="t m" style="left:398px;top:285px;width:21px;line-height:24px;font-size:12.5px;color:#999;text-align:right;padding-top:1.7px">23</div>
<div class="t m" style="left:398px;top:309px;width:21px;line-height:24px;font-size:12.5px;color:#999;text-align:right;padding-top:1.7px">24</div>
<div class="t m" style="left:467px;top:309px;line-height:24px;font-size:13.333px;color:#000;padding-top:1.6px;transform-origin:0 17.2px;transform:scaleY(1.12)">        <span class="k">val</span> inputStream = context.<span class="p">contentResolver</span>.openInputStream(uri)</div>
<div class="t m" style="left:398px;top:333px;width:21px;line-height:24px;font-size:12.5px;color:#999;text-align:right;padding-top:1.7px">25</div>
<div class="t m" style="left:467px;top:333px;line-height:24px;font-size:13.333px;color:#000;padding-top:1.6px;transform-origin:0 17.2px;transform:scaleY(1.12)">        <span class="k">val</span> byteArray = inputStream!!.<i>readBytes</i>()</div>
<div class="t m" style="left:398px;top:357px;width:21px;line-height:24px;font-size:12.5px;color:#999;text-align:right;padding-top:1.7px">26</div>
<div class="t m" style="left:467px;top:357px;line-height:24px;font-size:13.333px;color:#000;padding-top:1.6px;transform-origin:0 17.2px;transform:scaleY(1.12)">        <span class="k">val</span> fileName = getFileName(context, uri)</div>
<div class="t m" style="left:398px;top:381px;width:21px;line-height:24px;font-size:12.5px;color:#999;text-align:right;padding-top:1.7px">27</div>
<div class="t m" style="left:398px;top:405px;width:21px;line-height:24px;font-size:12.5px;color:#999;text-align:right;padding-top:1.7px">28</div>
<div class="t m" style="left:467px;top:405px;line-height:24px;font-size:13.333px;color:#000;padding-top:1.6px;transform-origin:0 17.2px;transform:scaleY(1.12)">        <span class="c">// Sent Data to server</span></div>
<div class="t m" style="left:398px;top:429px;width:21px;line-height:24px;font-size:12.5px;color:#999;text-align:right;padding-top:1.7px">29</div>
<div class="t m" style="left:467px;top:429px;line-height:24px;font-size:13.333px;color:#000;padding-top:1.6px;transform-origin:0 17.2px;transform:scaleY(1.12)">        <span class="k">val</span> <span class="w">_username</span> = <span class="s">"admin"</span></div>
<div class="t m" style="left:398px;top:453px;width:21px;line-height:24px;font-size:12.5px;color:#999;text-align:right;padding-top:1.7px">30</div>
<div class="t m" style="left:467px;top:453px;line-height:24px;font-size:13.333px;color:#000;padding-top:1.6px;transform-origin:0 17.2px;transform:scaleY(1.12)">        <span class="k">val</span> <span class="w">_password</span> = <span class="s">"i love <span class="w">codemobiles</span>"</span></div>
<div class="t m" style="left:398px;top:477px;width:21px;line-height:24px;font-size:12.5px;color:#999;text-align:right;padding-top:1.7px">31</div>
<div class="t m" style="left:398px;top:501px;width:21px;line-height:24px;font-size:12.5px;color:#999;text-align:right;padding-top:1.7px">32</div>
<div class="t m" style="left:398px;top:525px;width:21px;line-height:24px;font-size:12.5px;color:#999;text-align:right;padding-top:1.7px">33</div>
<div class="t m" style="left:467px;top:525px;line-height:24px;font-size:13.333px;color:#000;padding-top:1.6px;transform-origin:0 17.2px;transform:scaleY(1.12)">        <span class="k">val</span> <span class="w">_reqFile</span> = RequestBody.create(MediaType.parse(<span class="s">"multipart/form-data"</span>), byteArray)</div>
<div class="t m" style="left:398px;top:549px;width:21px;line-height:24px;font-size:12.5px;color:#999;text-align:right;padding-top:1.7px">34</div>
<div class="t m" style="left:467px;top:549px;line-height:24px;font-size:13.333px;color:#000;padding-top:1.6px;transform-origin:0 17.2px;transform:scaleY(1.12)">        <span class="k">val</span> <span class="w">_body</span> = MultipartBody.Part.createFormData(<span class="s">"<span class="w">userfile</span>"</span>, fileName, _reqFile)  <span class="c">//images</span></div>
<div class="t m" style="left:398px;top:573px;width:21px;line-height:24px;font-size:12.5px;color:#999;text-align:right;padding-top:1.7px">35</div>
<div class="t m" style="left:467px;top:573px;line-height:24px;font-size:13.333px;color:#000;padding-top:1.6px;transform-origin:0 17.2px;transform:scaleY(1.12)">        <span class="k">val</span> <span class="w">_bodyUsername</span> = RequestBody.create(MediaType.parse(<span class="s">"text/plain"</span>), _username)</div>
<div class="t m" style="left:398px;top:597px;width:21px;line-height:24px;font-size:12.5px;color:#999;text-align:right;padding-top:1.7px">36</div>
<div class="t m" style="left:467px;top:597px;line-height:24px;font-size:13.333px;color:#000;padding-top:1.6px;transform-origin:0 17.2px;transform:scaleY(1.12)">        <span class="k">val</span> <span class="w">_bodyPassword</span> = RequestBody.create(MediaType.parse(<span class="s">"text/plain"</span>), _password)</div>
<div class="t m" style="left:398px;top:621px;width:21px;line-height:24px;font-size:12.5px;color:#999;text-align:right;padding-top:1.7px">37</div>
<div class="t m" style="left:398px;top:645px;width:21px;line-height:24px;font-size:12.5px;color:#999;text-align:right;padding-top:1.7px">38</div>
<div class="t m" style="left:398px;top:669px;width:21px;line-height:24px;font-size:12.5px;color:#999;text-align:right;padding-top:1.7px">39</div>
<div class="t m" style="left:467px;top:669px;line-height:24px;font-size:13.333px;color:#000;padding-top:1.6px;transform-origin:0 17.2px;transform:scaleY(1.12)">        <span class="k">val</span> call = RetrofitClient2.<span class="q">client</span>.postImageNodeJS(_body, _bodyUsername, _bodyPassword)</div>
<div class="t m" style="left:398px;top:693px;width:21px;line-height:24px;font-size:12.5px;color:#999;text-align:right;padding-top:1.7px">40</div>
<div class="t m" style="left:467px;top:693px;line-height:24px;font-size:13.333px;color:#000;padding-top:1.6px;transform-origin:0 17.2px;transform:scaleY(1.12)">        call.enqueue(<span class="k">object</span> : Callback&lt;ResponseBody&gt; {</div>
<div class="t m" style="left:398px;top:717px;width:21px;line-height:24px;font-size:12.5px;color:#999;text-align:right;padding-top:1.7px">41</div>
<div class="t m" style="left:467px;top:717px;line-height:24px;font-size:13.333px;color:#000;padding-top:1.6px;transform-origin:0 17.2px;transform:scaleY(1.12)">            <span class="k">override fun</span> onFailure(call: Call&lt;ResponseBody&gt;, t: Throwable) {</div>
<div class="t m" style="left:398px;top:741px;width:21px;line-height:24px;font-size:12.5px;color:#999;text-align:right;padding-top:1.7px">42</div>
<div class="t m" style="left:467px;top:741px;line-height:24px;font-size:13.333px;color:#000;padding-top:1.6px;transform-origin:0 17.2px;transform:scaleY(1.12)">                Toast.makeText(context, t.toString(), Toast.<span class="p">LENGTH_LONG</span>).show()</div>
<div class="t m" style="left:398px;top:765px;width:21px;line-height:24px;font-size:12.5px;color:#999;text-align:right;padding-top:1.7px">43</div>
<div class="t m" style="left:467px;top:765px;line-height:24px;font-size:13.333px;color:#000;padding-top:1.6px;transform-origin:0 17.2px;transform:scaleY(1.12)">            }</div>
<div class="t m" style="left:398px;top:789px;width:21px;line-height:24px;font-size:12.5px;color:#999;text-align:right;padding-top:1.7px">44</div>
<div class="t m" style="left:398px;top:813px;width:21px;line-height:24px;font-size:12.5px;color:#999;text-align:right;padding-top:1.7px">45</div>
<div class="t m" style="left:467px;top:813px;line-height:24px;font-size:13.333px;color:#000;padding-top:1.6px;transform-origin:0 17.2px;transform:scaleY(1.12)">            <span class="k">override fun</span> onResponse(call: Call&lt;ResponseBody&gt;, response: Response&lt;ResponseBody&gt;) {</div>
<div class="t m" style="left:398px;top:837px;width:21px;line-height:24px;font-size:12.5px;color:#999;text-align:right;padding-top:1.7px">46</div>
<div class="t m" style="left:467px;top:837px;line-height:24px;font-size:13.333px;color:#000;padding-top:1.6px;transform-origin:0 17.2px;transform:scaleY(1.12)">                Toast.makeText(context, response.body()!!.string(), Toast.<span class="p">LENGTH_LONG</span>)</div>
<div class="t m" style="left:398px;top:861px;width:21px;line-height:24px;font-size:12.5px;color:#999;text-align:right;padding-top:1.7px">47</div>
<div class="t m" style="left:467px;top:861px;line-height:24px;font-size:13.333px;color:#000;padding-top:1.6px;transform-origin:0 17.2px;transform:scaleY(1.12)">                    .show()</div>
<div class="t m" style="left:398px;top:885px;width:21px;line-height:24px;font-size:12.5px;color:#999;text-align:right;padding-top:1.7px">48</div>
<div class="t m" style="left:467px;top:885px;line-height:24px;font-size:13.333px;color:#000;padding-top:1.6px;transform-origin:0 17.2px;transform:scaleY(1.12)">            }</div>
<div class="t m" style="left:398px;top:909px;width:21px;line-height:24px;font-size:12.5px;color:#999;text-align:right;padding-top:1.7px">49</div>
<div class="t m" style="left:398px;top:933px;width:21px;line-height:24px;font-size:12.5px;color:#999;text-align:right;padding-top:1.7px">50</div>
<div class="t m" style="left:467px;top:933px;line-height:24px;font-size:13.333px;color:#000;padding-top:1.6px;transform-origin:0 17.2px;transform:scaleY(1.12)">        })</div>
<div class="t m" style="left:398px;top:957px;width:21px;line-height:24px;font-size:12.5px;color:#999;text-align:right;padding-top:1.7px">51</div>
<div class="t m" style="left:467px;top:957px;line-height:24px;font-size:13.333px;color:#000;padding-top:1.6px;transform-origin:0 17.2px;transform:scaleY(1.12)">    }</div>
<div class="t m" style="left:398px;top:981px;width:21px;line-height:24px;font-size:12.5px;color:#999;text-align:right;padding-top:1.7px">52</div>
</div></div>
<svg class="r" style="left:456px;top:172px;" width="10" height="10" viewBox="0 0 10 10"><rect x="0.5" y="0.5" width="9" height="9" fill="#fff" stroke="#c8c8c8"/><path d="M2.5 5 H7.5 M5 2.5 V7.5" stroke="#b0b0b0"/></svg>
<svg class="r" style="left:455px;top:220.2px;" width="11" height="13" viewBox="0 0 11 13"><path d="M0.5 0.5 H10.5 V7.5 L5.5 11.7 L0.5 7.5 Z" fill="#fff" stroke="#c8c8c8"/><path d="M3 5 H8" stroke="#b0b0b0"/></svg>
<svg class="r" style="left:455px;top:268.2px;" width="11" height="13" viewBox="0 0 11 13"><path d="M0.5 0.5 H10.5 V7.5 L5.5 11.7 L0.5 7.5 Z" fill="#fff" stroke="#c8c8c8"/><path d="M3 5 H8" stroke="#b0b0b0"/></svg>
<svg class="r" style="left:455px;top:700.2px;" width="11" height="13" viewBox="0 0 11 13"><path d="M0.5 0.5 H10.5 V7.5 L5.5 11.7 L0.5 7.5 Z" fill="#fff" stroke="#c8c8c8"/><path d="M3 5 H8" stroke="#b0b0b0"/></svg>
<svg class="r" style="left:455px;top:724.2px;" width="11" height="13" viewBox="0 0 11 13"><path d="M0.5 0.5 H10.5 V7.5 L5.5 11.7 L0.5 7.5 Z" fill="#fff" stroke="#c8c8c8"/><path d="M3 5 H8" stroke="#b0b0b0"/></svg>
<svg class="r" style="left:455px;top:820.2px;" width="11" height="13" viewBox="0 0 11 13"><path d="M0.5 0.5 H10.5 V7.5 L5.5 11.7 L0.5 7.5 Z" fill="#fff" stroke="#c8c8c8"/><path d="M3 5 H8" stroke="#b0b0b0"/></svg>
<svg class="r" style="left:455px;top:771px;" width="11" height="12" viewBox="0 0 11 12"><path d="M0.5 11.5 H10.5 V5 L5.5 1 L0.5 5 Z" fill="#fff" stroke="#c8c8c8"/><path d="M3 7.5 H8" stroke="#b0b0b0"/></svg>
<svg class="r" style="left:455px;top:891px;" width="11" height="12" viewBox="0 0 11 12"><path d="M0.5 11.5 H10.5 V5 L5.5 1 L0.5 5 Z" fill="#fff" stroke="#c8c8c8"/><path d="M3 7.5 H8" stroke="#b0b0b0"/></svg>
<svg class="r" style="left:455px;top:939px;" width="11" height="12" viewBox="0 0 11 12"><path d="M0.5 11.5 H10.5 V5 L5.5 1 L0.5 5 Z" fill="#fff" stroke="#c8c8c8"/><path d="M3 7.5 H8" stroke="#b0b0b0"/></svg>
<svg class="r" style="left:455px;top:963px;" width="11" height="12" viewBox="0 0 11 12"><path d="M0.5 11.5 H10.5 V5 L5.5 1 L0.5 5 Z" fill="#fff" stroke="#c8c8c8"/><path d="M3 7.5 H8" stroke="#b0b0b0"/></svg>
<svg class="r" style="left:429px;top:722px;" width="18" height="14" viewBox="0 0 18 14"><circle cx="5.5" cy="7" r="4.5" fill="#6cb56c"/><path d="M4 5 H7 M5.5 5 V9 M4 9 H7" stroke="#333" stroke-width="0.8"/><path d="M13 13 V2 M10.5 5 L13 1.5 L15.5 5" stroke="#e05555" stroke-width="1.3" fill="none"/></svg>
<svg class="r" style="left:429px;top:818px;" width="18" height="14" viewBox="0 0 18 14"><circle cx="5.5" cy="7" r="4.5" fill="#6cb56c"/><path d="M4 5 H7 M5.5 5 V9 M4 9 H7" stroke="#333" stroke-width="0.8"/><path d="M13 13 V2 M10.5 5 L13 1.5 L15.5 5" stroke="#e05555" stroke-width="1.3" fill="none"/></svg>
<svg class="r" style="left:1239px;top:129px;" width="13" height="12" viewBox="0 0 13 12"><path d="M6.5 0.5 L12.5 11.5 H0.5 Z" fill="#f2c500"/><path d="M6.5 4 V8 M6.5 9.3 V10.6" stroke="#fff" stroke-width="1.4"/></svg>
<div class="t" style="left:1254.5px;top:127.0px;line-height:16px;font-size:12px;color:#555;font-weight:400;">4</div>
<svg class="r" style="left:1269px;top:129px;" width="13" height="12" viewBox="0 0 13 12"><path d="M6.5 0.5 L12.5 11.5 H0.5 Z" fill="#d9cda5"/><path d="M6.5 4 V8 M6.5 9.3 V10.6" stroke="#fff" stroke-width="1.4"/></svg>
<div class="t" style="left:1284.5px;top:127.0px;line-height:16px;font-size:12px;color:#555;font-weight:400;">6</div>
<svg class="r" style="left:1298px;top:127px;" width="14" height="16" viewBox="0 0 14 16"><path d="M1 7 L5 11 L13 2" stroke="#4caf50" stroke-width="2.2" fill="none"/><path d="M1 13 L3 15 L5 13 L7 15 L9 13 L11 15" stroke="#4caf50" stroke-width="1" fill="none"/></svg>
<div class="t" style="left:1314px;top:127.0px;line-height:16px;font-size:12px;color:#555;font-weight:400;">2</div>
<svg class="r" style="left:1331px;top:131px;" width="10" height="7" viewBox="0 0 10 7"><path d="M1 6 L5 1.5 L9 6" stroke="#555" stroke-width="1.2" fill="none"/></svg>
<svg class="r" style="left:1352px;top:132px;" width="10" height="7" viewBox="0 0 10 7"><path d="M1 1 L5 5.5 L9 1" stroke="#555" stroke-width="1.2" fill="none"/></svg>
<div class="r" style="left:1359.5px;top:153px;width:6px;height:533px;background:#c4c4c4;border-radius:3px"></div>
<div class="r" style="left:1355px;top:177px;width:14px;height:2px;background:#e3b400;"></div>
<div class="r" style="left:1355px;top:338.5px;width:14px;height:1.5px;background:#c8b98a;"></div>
<div class="r" style="left:1355px;top:353px;width:14px;height:1.5px;background:#c8b98a;"></div>
<div class="r" style="left:1355px;top:397.5px;width:14px;height:1.5px;background:#c8b98a;"></div>
<div class="r" style="left:1355px;top:412px;width:14px;height:1.5px;background:#c8b98a;"></div>
<div class="r" style="left:1355px;top:425.5px;width:14px;height:1.5px;background:#c8b98a;"></div>
<div class="r" style="left:1355px;top:440.5px;width:14px;height:1.5px;background:#c8b98a;"></div>
<div class="r" style="left:1355px;top:777px;width:14px;height:2px;background:#e3b400;"></div>
<svg class="r" style="left:1352px;top:72px;" width="17" height="16" viewBox="0 0 17 16"><path d="M2 6 L7 1 L10.5 4.5 L5.5 9.5 Z" fill="#499c54"/><path d="M7.5 6.5 L15 14" stroke="#499c54" stroke-width="2.6"/></svg>
<div class="r" style="left:1377px;top:70px;width:1px;height:20px;background:#d1d1d1;"></div>
<div class="r" style="left:1387px;top:69.5px;width:73px;height:21px;border:1px solid #c9c9c9;border-radius:4px;background:#fff;box-sizing:border-box"></div>
<svg class="r" style="left:1397px;top:74px;" width="16" height="14" viewBox="0 0 16 14"><path d="M1 9 A6 6 0 0 1 13 9 Z" fill="#3ddc84"/><path d="M3.5 1.5 L5 4 M10.5 1.5 L9 4" stroke="#3ddc84" stroke-width="1.1"/><circle cx="11.5" cy="10.5" r="3" fill="#fff"/><circle cx="11.5" cy="10.5" r="2.3" fill="#2aa845"/></svg>
<div class="t" style="left:1416px;top:71.0px;line-height:18px;font-size:12.5px;color:#000;font-weight:400;letter-spacing:-0.930px;">app</div>
<svg class="r" style="left:1442px;top:77px;" width="10" height="6" viewBox="0 0 10 6"><path d="M0.5 0.5 H9.5 L5 5.5 Z" fill="#555"/></svg>
<div class="r" style="left:1467px;top:69.5px;width:124px;height:21px;border:1px solid #c9c9c9;border-radius:4px;background:#fff;box-sizing:border-box"></div>
<svg class="r" style="left:1479px;top:73px;" width="14" height="15" viewBox="0 0 14 15"><rect x="1.5" y="0.8" width="8" height="12.5" rx="1" fill="none" stroke="#6e6e6e" stroke-width="1.2"/><rect x="6" y="7" width="6.5" height="6.5" fill="#fff"/><circle cx="9.5" cy="10.5" r="2.6" fill="#2aa845"/><rect x="7.3" y="8.3" width="4.4" height="4.4" fill="none" stroke="#6b5fd0" stroke-width="0.8"/></svg>
<div class="t" style="left:1496px;top:71.0px;line-height:18px;font-size:12.5px;color:#000;font-weight:400;letter-spacing:-0.419px;">Pixel 4 API 33</div>
<svg class="r" style="left:1573px;top:77px;" width="10" height="6" viewBox="0 0 10 6"><path d="M0.5 0.5 H9.5 L5 5.5 Z" fill="#555"/></svg>
<svg class="r" style="left:1601px;top:73px;" width="17" height="15" viewBox="0 0 17 15"><path d="M10 2.5 A5.5 5.5 0 1 0 7 13.5" stroke="#499c54" stroke-width="2" fill="none"/><path d="M9 0 L14 3.5 L9 7 Z" fill="#499c54"/><rect x="8.5" y="9" width="5.5" height="5.5" fill="#6e6e6e"/></svg>
<svg class="r" style="left:1626px;top:73px;" width="17" height="15" viewBox="0 0 17 15"><path d="M10 2.5 A5.5 5.5 0 1 0 7 13.5" stroke="#499c54" stroke-width="2" fill="none"/><path d="M9 0 L14 3.5 L9 7 Z" fill="#499c54"/><path d="M8 14.5 L10.5 8 L13 14.5 M9 12.5 H12" stroke="#6e6e6e" stroke-width="1.3" fill="none"/></svg>
<svg class="r" style="left:1654px;top:73px;" width="16" height="15" viewBox="0 0 16 15"><path d="M1 2 H13 M1 6 H13 M1 10 H8 M1 14 H8" stroke="#6e6e6e" stroke-width="1.8"/><path d="M10 11 A2.5 2.5 0 1 1 12 14" stroke="#499c54" stroke-width="1.2" fill="none"/></svg>
<svg class="r" style="left:1680px;top:73px;" width="14" height="15" viewBox="0 0 14 15"><ellipse cx="7" cy="8.5" rx="4.5" ry="5.5" fill="#499c54"/><path d="M3.5 1 L5 3.5 M10.5 1 L9 3.5 M0 6 H14 M0 10 H14 M1 13.5 L3 12 M13 13.5 L11 12" stroke="#499c54" stroke-width="1.6"/><path d="M4.5 7 H9.5 M4.5 10 H9.5" stroke="#f2f2f2" stroke-width="1.2"/></svg>
<svg class="r" style="left:1706px;top:72px;" width="16" height="17" viewBox="0 0 16 17"><path d="M1 3 L5.5 1 L10 3 V8 Q10 12 5.5 14 Q1 12 1 8 Z" fill="#c4c4c4"/><path d="M5.5 1 V14" stroke="#f2f2f2" stroke-width="1.2"/><path d="M8 8 L15 12 L8 16 Z" fill="#c4c4c4"/></svg>
<svg class="r" style="left:1731px;top:73px;" width="16" height="14" viewBox="0 0 16 14"><path d="M2 11 A6 6 0 0 1 10 4.5" stroke="#3592c4" stroke-width="2.2" fill="none"/><path d="M8 11 L12 5 L10 12 Z" fill="#555"/><path d="M12.5 8 L14.5 11 H12 Z" fill="#555"/></svg>
<svg class="r" style="left:1758px;top:72px;" width="16" height="17" viewBox="0 0 16 17"><ellipse cx="6" cy="8.5" rx="4" ry="5" fill="#499c54"/><path d="M3 1 L4.5 3.5 M9 1 L7.5 3.5 M0 6 H12 M0 10 H12" stroke="#499c54" stroke-width="1.5"/><path d="M8.5 15.5 L14.5 9.5 M10 9.5 H14.5 V14" stroke="#555" stroke-width="1.8" fill="none"/></svg>
<div class="r" style="left:1786px;top:75px;width:10.5px;height:10.5px;background:#db5860;"></div>
<div class="r" style="left:1807px;top:71px;width:1px;height:19px;background:#d1d1d1;"></div>
<svg class="r" style="left:1816px;top:74px;" width="17" height="15" viewBox="0 0 17 15"><path d="M1 12 V8 Q1 3 6 3 Q9 3 10 5 L12 3 Q14 1 14 4 V7 Q12 9 10 8 L9 12 H7 V9 H4 V12 Z" fill="#6e6e6e"/><path d="M14 8 L9.5 12.5 M9.5 9 V12.5 H13" stroke="#3592c4" stroke-width="1.8" fill="none"/></svg>
<svg class="r" style="left:1844px;top:73px;" width="15" height="15" viewBox="0 0 15 15"><rect x="1" y="1" width="7.5" height="12" rx="1" fill="none" stroke="#6e6e6e" stroke-width="1.3"/><path d="M5.5 14.5 A4.5 4.5 0 0 1 14.5 14.5 Z" fill="#3ddc84"/><rect x="5" y="8" width="10" height="3" fill="#f2f2f2"/><path d="M5.5 14.5 A4.5 4.5 0 0 1 14.5 14.5 Z" fill="#3ddc84"/></svg>
<svg class="r" style="left:1868px;top:73px;" width="17" height="16" viewBox="0 0 17 16"><path d="M5 0.5 L9.5 2.5 V8 L5 10 L0.5 8 V2.5 Z" fill="#6e6e6e"/><path d="M0.5 2.5 L5 4.5 L9.5 2.5 M5 4.5 V10" stroke="#f2f2f2" stroke-width="0.8" fill="none"/><path d="M12 6 V14 M8.5 10.5 L12 14 L15.5 10.5" stroke="#3592c4" stroke-width="1.6" fill="none"/></svg>
<div class="r" style="left:1892px;top:71px;width:1px;height:19px;background:#d1d1d1;"></div>
<svg class="r" style="left:1901px;top:73px;" width="16" height="15" viewBox="0 0 16 15"><circle cx="6.3" cy="6.3" r="4.8" fill="none" stroke="#6e6e6e" stroke-width="1.7"/><path d="M9.8 9.8 L14.5 14.5" stroke="#6e6e6e" stroke-width="1.9"/></svg>
<svg class="r" style="left:1927px;top:72px;" width="16" height="16" viewBox="0 0 16 16"><circle cx="8" cy="8" r="8" fill="#f0a30a"/><path d="M8 12.5 V4.5 M4.8 7.5 L8 4.3 L11.2 7.5" stroke="#fff" stroke-width="1.8" fill="none"/></svg>
<svg class="r" style="left:1953px;top:72px;" width="16" height="16" viewBox="0 0 16 16"><rect width="16" height="16" fill="#a8a8a0"/><rect x="1" y="1" width="14" height="14" fill="#c9c9c0"/><path d="M8 3 A3 3 0 0 0 5 6 V10 A3 3 0 0 0 8 13" stroke="#d8552a" stroke-width="1.6" fill="none"/><path d="M3 13 H13" stroke="#333" stroke-width="1.5"/></svg>
<div class="r" style="left:1369px;top:95px;width:1px;height:905px;background:#d1d1d1;"></div>
<div class="r" style="left:1370px;top:95px;width:585px;height:905px;background:#f2f2f2;"></div>
<div class="r" style="left:1370px;top:95px;width:585px;height:26px;background:#e7ebf1;"></div>
<div class="r" style="left:1370px;top:121px;width:585px;height:1px;background:#d5d8dc;"></div>
<div class="t" style="left:1376px;top:99.8px;line-height:18px;font-size:12.5px;color:#000;font-weight:400;letter-spacing:-0.061px;">Emulator:</div>
<svg class="r" style="left:1452px;top:100px;" width="14" height="15" viewBox="0 0 14 15"><rect x="1.5" y="0.8" width="8" height="12.5" rx="1" fill="none" stroke="#6e6e6e" stroke-width="1.2"/><rect x="6" y="7" width="6.5" height="6.5" fill="#fff"/><circle cx="9.5" cy="10.5" r="2.6" fill="#2aa845"/><rect x="7.3" y="8.3" width="4.4" height="4.4" fill="none" stroke="#6b5fd0" stroke-width="0.8"/></svg>
<div class="t" style="left:1469px;top:99.8px;line-height:18px;font-size:12.5px;color:#000;font-weight:400;letter-spacing:0.012px;">Pixel 4 API 33</div>
<svg class="r" style="left:1554px;top:104px;" width="9" height="9" viewBox="0 0 9 9"><path d="M0.5 0.5 L8.5 8.5 M8.5 0.5 L0.5 8.5" stroke="#b0b0b0" stroke-width="1.1"/></svg>
<div class="r" style="left:1437px;top:118px;width:136px;height:3px;background:#4083c9;"></div>
<svg class="r" style="left:1909px;top:101px;" width="14" height="14" viewBox="0 0 14 14"><g transform="scale(1.0)"><path d="M13.90 5.82 L13.90 8.18 L12.07 8.15 L11.40 9.77 L12.72 11.04 L11.04 12.72 L9.77 11.40 L8.15 12.07 L8.18 13.90 L5.82 13.90 L5.85 12.07 L4.23 11.40 L2.96 12.72 L1.28 11.04 L2.60 9.77 L1.93 8.15 L0.10 8.18 L0.10 5.82 L1.93 5.85 L2.60 4.23 L1.28 2.96 L2.96 1.28 L4.23 2.60 L5.85 1.93 L5.82 0.10 L8.18 0.10 L8.15 1.93 L9.77 2.60 L11.04 1.28 L12.72 2.96 L11.40 4.23 L12.07 5.85 Z" fill="#6e6e6e"/><circle cx="7" cy="7" r="2.3" fill="#f2f2f2"/></g></svg>
<div class="r" style="left:1935px;top:107px;width:13px;height:2px;background:#6e6e6e;"></div>
<div class="r" style="left:1370px;top:150px;width:585px;height:1px;background:#dadada;"></div>
<svg class="r" style="left:1376px;top:129px;" width="14" height="14" viewBox="0 0 14 14"><path d="M4 3 A5.5 5.5 0 1 0 10 3" stroke="#6e6e6e" stroke-width="1.6" fill="none"/><path d="M7 0.5 V7" stroke="#6e6e6e" stroke-width="1.6"/></svg>
<svg class="r" style="left:1398px;top:129px;" width="15" height="14" viewBox="0 0 15 14"><path d="M1 5 H4 L8 1.5 V12.5 L4 9 H1 Z" fill="#6e6e6e"/><path d="M10 4.5 Q12 7 10 9.5 M12 2.5 Q15.5 7 12 11.5" stroke="#6e6e6e" stroke-width="1.2" fill="none"/></svg>
<svg class="r" style="left:1421px;top:129px;" width="14" height="14" viewBox="0 0 14 14"><path d="M1 5 H4 L8 1.5 V12.5 L4 9 H1 Z" fill="#6e6e6e"/><path d="M10 4.5 Q12 7 10 9.5" stroke="#6e6e6e" stroke-width="1.2" fill="none"/></svg>
<svg class="r" style="left:1443px;top:128px;" width="16" height="16" viewBox="0 0 16 16"><rect x="1" y="3" width="6" height="11" fill="none" stroke="#6e6e6e" stroke-width="1.3"/><path d="M10 2 Q15 5 12 13" stroke="#3592c4" stroke-width="1.4" fill="none"/><path d="M10 11 L12 14 L14.5 11.5" stroke="#3592c4" stroke-width="1.3" fill="none"/></svg>
<svg class="r" style="left:1469px;top:128px;" width="16" height="16" viewBox="0 0 16 16"><rect x="9" y="3" width="6" height="11" fill="none" stroke="#6e6e6e" stroke-width="1.3"/><path d="M6 2 Q1 5 4 13" stroke="#3592c4" stroke-width="1.4" fill="none"/><path d="M6 5 L5.5 1.5 L2 2.5" stroke="#3592c4" stroke-width="1.3" fill="none"/></svg>
<svg class="r" style="left:1498px;top:131px;" width="10" height="10" viewBox="0 0 10 10"><path d="M9 0.5 V9.5 L1 5 Z" fill="#6e6e6e"/></svg>
<div class="r" style="left:1525px;top:132px;width:8px;height:8px;border-radius:50%;background:#6e6e6e"></div>
<div class="r" style="left:1551px;top:132px;width:8px;height:8px;background:#6e6e6e;border-radius:1px"></div>
<svg class="r" style="left:1573px;top:129px;" width="16" height="14" viewBox="0 0 16 14"><path d="M1 3.5 H4.5 L6 1 H10 L11.5 3.5 H15 V13 H1 Z" fill="#6e6e6e"/><circle cx="8" cy="8" r="3" fill="#f2f2f2"/><circle cx="8" cy="8" r="1.8" fill="#6e6e6e"/></svg>
<svg class="r" style="left:1599px;top:128px;" width="16" height="16" viewBox="0 0 16 16"><path d="M3.3 4 A6 6 0 1 1 2.5 10" stroke="#6e6e6e" stroke-width="1.5" fill="none"/><path d="M1 1.5 V6 H5.5" stroke="#6e6e6e" stroke-width="1.5" fill="none"/><path d="M8.5 5 V8.5 L11 10" stroke="#6e6e6e" stroke-width="1.3" fill="none"/></svg>
<div class="r" style="left:1631px;top:129.5px;width:3px;height:3px;border-radius:50%;background:#6e6e6e"></div>
<div class="r" style="left:1631px;top:134.5px;width:3px;height:3px;border-radius:50%;background:#6e6e6e"></div>
<div class="r" style="left:1631px;top:139.5px;width:3px;height:3px;border-radius:50%;background:#6e6e6e"></div>
<div class="r" style="left:1462px;top:152px;width:396px;height:845px;border-radius:57px;background:#0b0b0d;box-shadow:inset 0 0 0 1.5px #3d3d40, inset 0 0 0 4.5px #141416, inset 0 0 0 6px #505053, inset 0 0 0 8px #757578, inset 0 0 0 9.5px #2a2a2c"></div>
<div class="r" style="left:1858px;top:357px;width:3px;height:53px;background:#e3684a;border-radius:0 2px 2px 0"></div>
<div class="r" style="left:1858px;top:463px;width:4px;height:104px;background:#111;border-radius:0 2px 2px 0"></div>
<div class="r" style="left:1563px;top:174px;width:19px;height:19px;border-radius:50%;background:radial-gradient(circle at 50% 50%, #223 0, #112 30%, #0b0b0b 45%, #1c1c1c 70%, #262626 100%)"></div>
<div class="r" style="left:1571px;top:182px;width:2px;height:2px;border-radius:50%;background:#6a7bd0"></div>
<div class="r" style="left:1592px;top:174px;width:9px;height:19px;background:#0e0e0e;border-radius:5px;box-shadow:inset 0 0 0 1px #1d1d1d"></div>
<div class="r" style="left:1640px;top:181px;width:41px;height:4px;background:#2a2a2a;border-radius:2px"></div>
<div class="r" style="left:1478px;top:201px;width:366px;height:772px;border-radius:34px 34px 34px 34px / 28px 28px 24px 24px;overflow:hidden;background:#000"><div class="r" style="left:0;top:0;width:366px;height:22px;background:#f2f2f2"></div><div class="r" style="left:0;top:22px;width:366px;height:52px;background:#fff"></div></div>
<div class="t" style="left:1487px;top:204.0px;line-height:16px;font-size:12px;color:#ffffff;font-weight:400;letter-spacing:-0.448px;">4:31</div>
<svg class="r" style="left:1517px;top:205px;" width="12" height="12" viewBox="0 0 12 12"><g transform="scale(0.8571428571428571)"><path d="M13.90 5.82 L13.90 8.18 L12.07 8.15 L11.40 9.77 L12.72 11.04 L11.04 12.72 L9.77 11.40 L8.15 12.07 L8.18 13.90 L5.82 13.90 L5.85 12.07 L4.23 11.40 L2.96 12.72 L1.28 11.04 L2.60 9.77 L1.93 8.15 L0.10 8.18 L0.10 5.82 L1.93 5.85 L2.60 4.23 L1.28 2.96 L2.96 1.28 L4.23 2.60 L5.85 1.93 L5.82 0.10 L8.18 0.10 L8.15 1.93 L9.77 2.60 L11.04 1.28 L12.72 2.96 L11.40 4.23 L12.07 5.85 Z" fill="#ffffff"/><circle cx="7" cy="7" r="2.3" fill="#f2f2f2"/></g></svg>
<svg class="r" style="left:1538px;top:205px;" width="12" height="13" viewBox="0 0 12 13"><path d="M6 0.5 L11.5 2.5 V6.5 Q11.5 10.5 6 12.5 Q0.5 10.5 0.5 6.5 V2.5 Z" fill="#fff"/><path d="M4.5 4 L8.5 6.5 L4.5 9 Z" fill="#f2f2f2"/></svg>
<svg class="r" style="left:1776px;top:205px;" width="14" height="12" viewBox="0 0 14 12"><path d="M0.5 3.5 Q7 -2 13.5 3.5 L7 11 Z" fill="#fff"/></svg>
<svg class="r" style="left:1792px;top:205px;" width="12" height="12" viewBox="0 0 12 12"><path d="M11.5 0.5 V11.5 H0.5 Z" fill="none" stroke="#fff" stroke-width="1"/></svg>
<svg class="r" style="left:1496px;top:242px;" width="16" height="16" viewBox="0 0 16 16"><path d="M1 1 L15 15 M15 1 L1 15" stroke="#111" stroke-width="1.8"/></svg>
<div class="t" style="left:1545px;top:238.5px;line-height:24px;font-size:19px;color:#111;font-weight:400;letter-spacing:-0.251px;-webkit-text-stroke:0.45px #111">Edit Photo</div>
<svg class="r" style="left:1813px;top:243px;" width="19" height="14" viewBox="0 0 19 14"><path d="M1 7 L6 12.3 L17 1.2" stroke="#111" stroke-width="1.8" fill="none"/></svg>
<div class="r" style="left:1478px;top:825px;width:366px;height:127px;background:#fff;border-radius:10px 10px 3px 3px"></div>
<div class="r" style="left:1478px;top:878px;width:366px;height:7px;background:linear-gradient(#fff,#ebebeb 60%,#f7f7f7)"></div>
<div class="t" style="left:1505.7px;top:836.5px;line-height:18px;font-size:13px;color:#111;font-weight:400;letter-spacing:-0.539px;">1:1</div>
<div class="t" style="left:1578.6px;top:836.5px;line-height:18px;font-size:13px;color:#111;font-weight:400;letter-spacing:-0.039px;">3:4</div>
<div class="t" style="left:1725px;top:836.5px;line-height:18px;font-size:13px;color:#111;font-weight:400;letter-spacing:0.111px;">3:2</div>
<div class="t" style="left:1795px;top:836.5px;line-height:18px;font-size:13px;color:#111;font-weight:400;letter-spacing:-0.104px;">16:9</div>
<svg class="r" style="left:1650px;top:907px;" width="22" height="22" viewBox="0 0 22 22"><path d="M17.5 7 A8 8 0 1 0 18.5 14" stroke="#777" stroke-width="2" fill="none"/><path d="M13 7.5 H19 V1.5" fill="#777"/><path d="M12.5 8 L19.5 8 L19.5 1 Z" fill="#777"/></svg>
<svg class="r" style="left:1773px;top:908px;" width="21" height="21" viewBox="0 0 21 21"><path d="M1 6 V1 H6 M15 1 H20 V6 M20 15 V20 H15 M6 20 H1 V15" stroke="#777" stroke-width="2" fill="none"/><rect x="5.5" y="5.5" width="10" height="10" fill="none" stroke="#777" stroke-width="2"/></svg>
<div class="r" style="left:1611px;top:963px;width:100px;height:3px;background:#f5f5f5;border-radius:2px"></div>
<svg class="r" style="left:1492px;top:461px" width="338" height="190" viewBox="0 0 337 189" preserveAspectRatio="none">
<defs>
<filter id="bl" x="-20%" y="-20%" width="140%" height="140%"><feGaussianBlur stdDeviation="5"/></filter>
<filter id="bl2"><feGaussianBlur stdDeviation="1.5"/></filter>
<filter id="bl3" x="-50%" y="-50%" width="200%" height="200%"><feGaussianBlur stdDeviation="6"/></filter>
<linearGradient id="bgv" x1="0" y1="0" x2="0" y2="1">
<stop offset="0" stop-color="#5f7150"/><stop offset="0.42" stop-color="#6f7a5e"/><stop offset="0.5" stop-color="#a8b98f"/>
<stop offset="0.58" stop-color="#c7cfae"/><stop offset="0.66" stop-color="#ddd6c4"/><stop offset="0.74" stop-color="#f1efec"/><stop offset="1" stop-color="#fbfbfb"/>
</linearGradient>
<linearGradient id="dogg" x1="0" y1="0" x2="1" y2="1">
<stop offset="0" stop-color="#35353e"/><stop offset="0.45" stop-color="#2a2a31"/><stop offset="1" stop-color="#1a1a1e"/>
</linearGradient>
</defs>
<rect width="337" height="189" fill="url(#bgv)"/>
<g filter="url(#bl)">
<rect x="-10" y="-10" width="130" height="95" fill="#4f6c45"/>
<ellipse cx="80" cy="28" rx="35" ry="30" fill="#5c8550"/>
<rect x="115" y="-10" width="115" height="82" fill="#7e8268"/>
<rect x="225" y="-10" width="122" height="98" fill="#66624f"/>
<rect x="245" y="0" width="8" height="85" fill="#575446"/><rect x="275" y="0" width="10" height="85" fill="#585547"/><rect x="305" y="0" width="9" height="88" fill="#5a5648"/>
<ellipse cx="165" cy="8" rx="40" ry="14" fill="#a4a886"/>
<ellipse cx="48" cy="58" rx="9" ry="22" fill="#c2c9be"/>
<ellipse cx="68" cy="47" rx="7" ry="10" fill="#b3bdb0"/>
<ellipse cx="30" cy="70" rx="14" ry="8" fill="#c9c6ab"/>
<rect x="-10" y="82" width="357" height="20" fill="#afc592"/>
<rect x="-10" y="100" width="357" height="18" fill="#d4cdb4"/>
<rect x="-10" y="118" width="357" height="81" fill="#f3f2f0"/>
<rect x="255" y="100" width="92" height="46" fill="#dcd5bd"/>
</g>
<path d="M81 81 C84 76 88 73 95 72 C108 68 122 63 131 60 C136 50 142 40 155 34 C170 29 190 30 205 35 C215 38 222 43 230 47 C244 52 258 62 265 78 C271 92 273 104 270 116 C274 126 280 140 284 150 C290 160 298 172 309 189 L160 189 C156 170 152 152 146 146 C134 142 118 136 104 129 C94 124 87 118 84 108 C81 100 80 90 81 81 Z" fill="url(#dogg)"/>
<g filter="url(#bl3)" opacity="0.7">
<ellipse cx="180" cy="45" rx="35" ry="12" fill="#4a4a55"/>
<ellipse cx="120" cy="72" rx="22" ry="6" fill="#4a4a55"/>
<ellipse cx="120" cy="110" rx="25" ry="12" fill="#3c3c46"/>
</g>
<path d="M216 44 C238 46 256 56 265 78 C272 96 274 110 266 120 C258 130 248 138 236 142 C228 132 226 118 228 100 C230 82 224 62 216 44 Z" fill="#34343d"/>
<path d="M219 46 C228 62 233 80 232 102 C231 122 234 134 238 140" stroke="#141418" stroke-width="3.5" fill="none" filter="url(#bl2)"/>
<ellipse cx="95" cy="83" rx="12" ry="9" fill="#18181c"/>
<ellipse cx="170" cy="64.5" rx="5.5" ry="4.8" fill="#1a1a1e"/>
<ellipse cx="170.5" cy="65" rx="4.2" ry="3.8" fill="#b8682c"/>
<circle cx="171" cy="65" r="1.7" fill="#2a140a"/>
<circle cx="172" cy="63.8" r="0.8" fill="#f3d2b0"/>
<ellipse cx="139" cy="57" rx="1.8" ry="3" fill="#6a5040"/>
<path d="M243 189 L258 189 L282 164 L279 155 Z" fill="#dd3b3b"/>
<path d="M112.5 0 V189 M225 0 V189 M0 63 H337 M0 125.7 H337" stroke="#e8e8e8" stroke-opacity="0.75" stroke-width="1"/>
<rect x="0.5" y="0.5" width="336" height="188" fill="none" stroke="#e0e0e0" stroke-width="1"/>
</svg>
<div class="r" style="left:1911px;top:872px;width:27px;height:107px;background:#fff;border:1px solid #d6d6d6;border-radius:3px;box-sizing:border-box"></div>
<svg class="r" style="left:1918px;top:879px;" width="13" height="13" viewBox="0 0 13 13"><path d="M6.5 1 V12 M1 6.5 H12" stroke="#444" stroke-width="1.4"/></svg>
<div class="r" style="left:1919px;top:912px;width:11px;height:1.2px;background:#bbb;"></div>
<div class="t" style="left:1917px;top:931.0px;line-height:14px;font-size:11px;color:#444;font-weight:700;">1:1</div>
<svg class="r" style="left:1918px;top:957px;" width="13" height="12" viewBox="0 0 13 12"><rect x="0.5" y="0.5" width="12" height="11" fill="none" stroke="#c0c0c0"/><path d="M3 7.5 V9 H4.5 M10 4.5 V3 H8.5" stroke="#c0c0c0" fill="none"/></svg>
<div class="r" style="left:1955px;top:95px;width:1px;height:905px;background:#d9d9d9;"></div>
<div class="r" style="left:1956px;top:95px;width:20px;height:905px;background:#f2f2f2;"></div>
<div class="r" style="left:1956px;top:822px;width:20px;height:84px;background:#cfcfcf;"></div>
<svg class="r" style="left:1959px;top:103px;" width="14" height="12" viewBox="0 0 14 12"><path d="M1 11 V7 Q1 2 6 2 Q9 2 10 4 L12 2 Q14 0 14 3 V6 Q12 8 10 7 L9 11 H7 V8 H4 V11 Z" fill="#6e6e6e"/></svg>
<div class="t" style="left:1949.0px;top:130.0px;width:74px;margin-left:-20px;height:16px;line-height:16px;text-align:center;font-size:12px;color:#222;letter-spacing:-0.403px;text-indent:-0.403px;transform:rotate(90deg)">Gradle</div>
<svg class="r" style="left:1959px;top:179px;" width="13" height="13" viewBox="0 0 13 13"><rect x="0.7" y="0.7" width="9" height="7" fill="none" stroke="#6e6e6e" stroke-width="1.1"/><rect x="6.5" y="4" width="5.5" height="8.5" rx="0.8" fill="#f2f2f2" stroke="#6e6e6e" stroke-width="1.1"/><path d="M2 11.5 H5" stroke="#6e6e6e" stroke-width="1.1"/></svg>
<div class="t" style="left:1924.5px;top:230.5px;width:123px;margin-left:-20px;height:16px;line-height:16px;text-align:center;font-size:12px;color:#222;letter-spacing:-0.337px;text-indent:-0.337px;transform:rotate(90deg)">Device Manager</div>
<svg class="r" style="left:1960px;top:689px;" width="11" height="13" viewBox="0 0 11 13"><rect x="1" y="0.7" width="8" height="11.5" rx="1" fill="none" stroke="#6e6e6e" stroke-width="1.1"/></svg>
<div class="t" style="left:1915.5px;top:749.5px;width:141px;margin-left:-20px;height:16px;line-height:16px;text-align:center;font-size:12px;color:#222;letter-spacing:-0.336px;text-indent:-0.336px;transform:rotate(90deg)">Device File Explorer</div>
<svg class="r" style="left:1959px;top:833px;" width="14" height="13" viewBox="0 0 14 13"><rect x="0.7" y="0.7" width="9" height="7" fill="none" stroke="#6e6e6e" stroke-width="1.1"/><rect x="6.5" y="4" width="5.5" height="8.5" rx="0.8" fill="#cfcfcf" stroke="#6e6e6e" stroke-width="1.1"/><circle cx="11" cy="3" r="2.3" fill="#2aa845"/></svg>
<div class="t" style="left:1943.0px;top:865.0px;width:86px;margin-left:-20px;height:16px;line-height:16px;text-align:center;font-size:12px;color:#222;letter-spacing:-0.288px;text-indent:-0.288px;transform:rotate(90deg)">Emulator</div>
<svg class="r" style="left:1959px;top:919px;" width="13" height="11" viewBox="0 0 13 11"><path d="M1 4 Q6.5 -1 12 4 M3 6 Q6.5 3 10 6 M5 8 Q6.5 7 8 8" stroke="#6e6e6e" stroke-width="1" fill="none"/><circle cx="6.5" cy="10" r="1" fill="#6e6e6e"/></svg>
<div class="t" style="left:1938.5px;top:954.5px;width:95px;margin-left:-20px;height:16px;line-height:16px;text-align:center;font-size:12px;color:#222;letter-spacing:-0.125px;text-indent:-0.125px;transform:rotate(90deg)">ADB Wi-Fi</div>
<div class="r" style="left:56px;top:999px;width:1920px;height:1px;background:#d1d1d1;"></div>
<div class="r" style="left:56px;top:1000px;width:1920px;height:20px;background:#f2f2f2;"></div>
<div class="r" style="left:56px;top:1020px;width:1920px;height:1px;background:#d9d9d9;"></div>
<div class="r" style="left:56px;top:1021px;width:1920px;height:20px;background:#f2f2f2;"></div>
<svg class="r" style="left:89px;top:1004px;" width="11" height="13" viewBox="0 0 11 13"><circle cx="2.5" cy="2" r="1.8" fill="#6e6e6e"/><circle cx="2.5" cy="11" r="1.8" fill="#6e6e6e"/><circle cx="8.5" cy="3.3" r="1.8" fill="#6e6e6e"/><path d="M2.5 2 V11 M8.5 3.3 V5.5 Q8.5 8 2.8 9.3" stroke="#6e6e6e" stroke-width="1.7" fill="none"/></svg>
<div class="t" style="left:105.4px;top:1001.0px;line-height:18px;font-size:12.5px;color:#222;font-weight:400;letter-spacing:-0.419px;">Version Control</div>
<svg class="r" style="left:209px;top:1003px;" width="14" height="14" viewBox="0 0 14 14"><path d="M1 1 L10 6.5 L1 12 Z" fill="#6e6e6e"/><circle cx="10.5" cy="11" r="2.8" fill="#fff"/><circle cx="10.5" cy="11" r="2.2" fill="#2aa845"/></svg>
<div class="t" style="left:225px;top:1001.0px;line-height:18px;font-size:12.5px;color:#222;font-weight:400;letter-spacing:-1.669px;">Run</div>
<svg class="r" style="left:264px;top:1004px;" width="12" height="11" viewBox="0 0 12 11"><path d="M0 1.5 H2 M0 5.5 H2 M0 9.5 H2 M4 1.5 H12 M4 5.5 H12 M4 9.5 H12" stroke="#6e6e6e" stroke-width="1.4"/></svg>
<div class="t" style="left:280px;top:1001.0px;line-height:18px;font-size:12.5px;color:#222;font-weight:400;letter-spacing:-1.464px;">TODO</div>
<svg class="r" style="left:332px;top:1004px;" width="12" height="12" viewBox="0 0 12 12"><circle cx="6" cy="6" r="6" fill="#db5860"/><path d="M6 2.5 V7 M6 8.5 V9.8" stroke="#fff" stroke-width="1.6"/></svg>
<div class="t" style="left:349px;top:1001.0px;line-height:18px;font-size:12.5px;color:#222;font-weight:400;letter-spacing:-0.614px;">Problems</div>
<svg class="r" style="left:418px;top:1003px;" width="14" height="14" viewBox="0 0 14 14"><path d="M2 5 L6 1 L9 4 L5 8 Z" fill="#6e6e6e"/><path d="M6.5 5.5 L12.5 12" stroke="#6e6e6e" stroke-width="2.2"/></svg>
<div class="t" style="left:435px;top:1001.0px;line-height:18px;font-size:12.5px;color:#222;font-weight:400;letter-spacing:-0.528px;">Build</div>
<svg class="r" style="left:481px;top:1003px;" width="13" height="15" viewBox="0 0 13 15"><ellipse cx="6.5" cy="8" rx="4.2" ry="5.5" fill="#6e6e6e"/><path d="M0 6 H13 M0 10 H13 M3.5 1.5 L4.8 3.5 M9.5 1.5 L8.2 3.5" stroke="#6e6e6e" stroke-width="1.4"/><rect x="4" y="12.5" width="5" height="2.5" fill="#6e6e6e"/></svg>
<div class="t" style="left:499px;top:1001.0px;line-height:18px;font-size:12.5px;color:#222;font-weight:400;letter-spacing:-0.331px;">App Inspection</div>
<svg class="r" style="left:600px;top:1004px;" width="14" height="12" viewBox="0 0 14 12"><path d="M2 11 A6 6 0 0 1 12 11" stroke="#6e6e6e" stroke-width="1.8" fill="none"/><path d="M6.5 10.5 L10 5 L8 11 Z" fill="#6e6e6e"/></svg>
<div class="t" style="left:617.8px;top:1001.0px;line-height:18px;font-size:12.5px;color:#222;font-weight:400;letter-spacing:-0.313px;">Profiler</div>
<svg class="r" style="left:676px;top:1004px;" width="12" height="11" viewBox="0 0 12 11"><path d="M0 1.5 H12 M0 5.5 H8 M0 9.5 H10" stroke="#6e6e6e" stroke-width="1.5"/></svg>
<div class="t" style="left:692.6px;top:1001.0px;line-height:18px;font-size:12.5px;color:#222;font-weight:400;letter-spacing:-0.426px;">Logcat</div>
<svg class="r" style="left:1745px;top:1003px;" width="14" height="14" viewBox="0 0 14 14"><path d="M7 1.2 A5.8 5.8 0 1 1 3 11.5 L1.5 13 V9 A5.8 5.8 0 0 1 7 1.2 Z" fill="none" stroke="#6e6e6e" stroke-width="1.2"/></svg>
<div class="t" style="left:1763px;top:1001.0px;line-height:18px;font-size:12.5px;color:#222;font-weight:400;letter-spacing:-0.662px;">Event Log</div>
<svg class="r" style="left:1837px;top:1003px;" width="15" height="14" viewBox="0 0 15 14"><rect x="0.7" y="0.7" width="8" height="8" fill="none" stroke="#6e6e6e" stroke-width="1.1"/><rect x="3" y="3" width="8" height="8" fill="#f2f2f2" stroke="#6e6e6e" stroke-width="1.1"/><circle cx="9.5" cy="9.5" r="2.5" fill="#f2f2f2" stroke="#6e6e6e" stroke-width="1.1"/><path d="M11.3 11.3 L14 14" stroke="#6e6e6e" stroke-width="1.3"/></svg>
<div class="t" style="left:1855px;top:1001.0px;line-height:18px;font-size:12.5px;color:#222;font-weight:400;letter-spacing:-0.294px;">Layout Inspector</div>
<svg class="r" style="left:62px;top:1025px;" width="13" height="13" viewBox="0 0 13 13"><rect x="3" y="0.7" width="9.3" height="9.3" fill="none" stroke="#6e6e6e" stroke-width="1.1"/><path d="M0.7 3 V12.3 H10" fill="none" stroke="#6e6e6e" stroke-width="1.1"/></svg>
<div class="t" style="left:86.7px;top:1022.0px;line-height:18px;font-size:12.5px;color:#222;font-weight:400;letter-spacing:-0.377px;">Launch succeeded (a minute ago)</div>
<div class="t" style="left:1801px;top:1022.0px;line-height:18px;font-size:12.5px;color:#222;font-weight:400;letter-spacing:-2.594px;">LF</div>
<div class="t" style="left:1825px;top:1022.0px;line-height:18px;font-size:12.5px;color:#222;font-weight:400;letter-spacing:-0.605px;">UTF-8</div>
<div class="t" style="left:1870px;top:1022.0px;line-height:18px;font-size:12.5px;color:#222;font-weight:400;letter-spacing:-0.279px;">4 spac...</div>
<svg class="r" style="left:1927px;top:1025px;" width="13" height="13" viewBox="0 0 13 13"><circle cx="6.5" cy="6.5" r="6.5" fill="#db5860"/><path d="M6.5 2.8 V7.5 M6.5 9 V10.5" stroke="#fff" stroke-width="1.7"/></svg>
<svg class="r" style="left:1951px;top:1025px;" width="14" height="13" viewBox="0 0 14 13"><path d="M1 1 H13 V10 H5 L2 12.5 V10 H1 Z" fill="#6e6e6e"/><path d="M7 3 V6.5 M7 7.8 V8.8" stroke="#f2f2f2" stroke-width="1.4"/></svg>
</div></div></body></html>
